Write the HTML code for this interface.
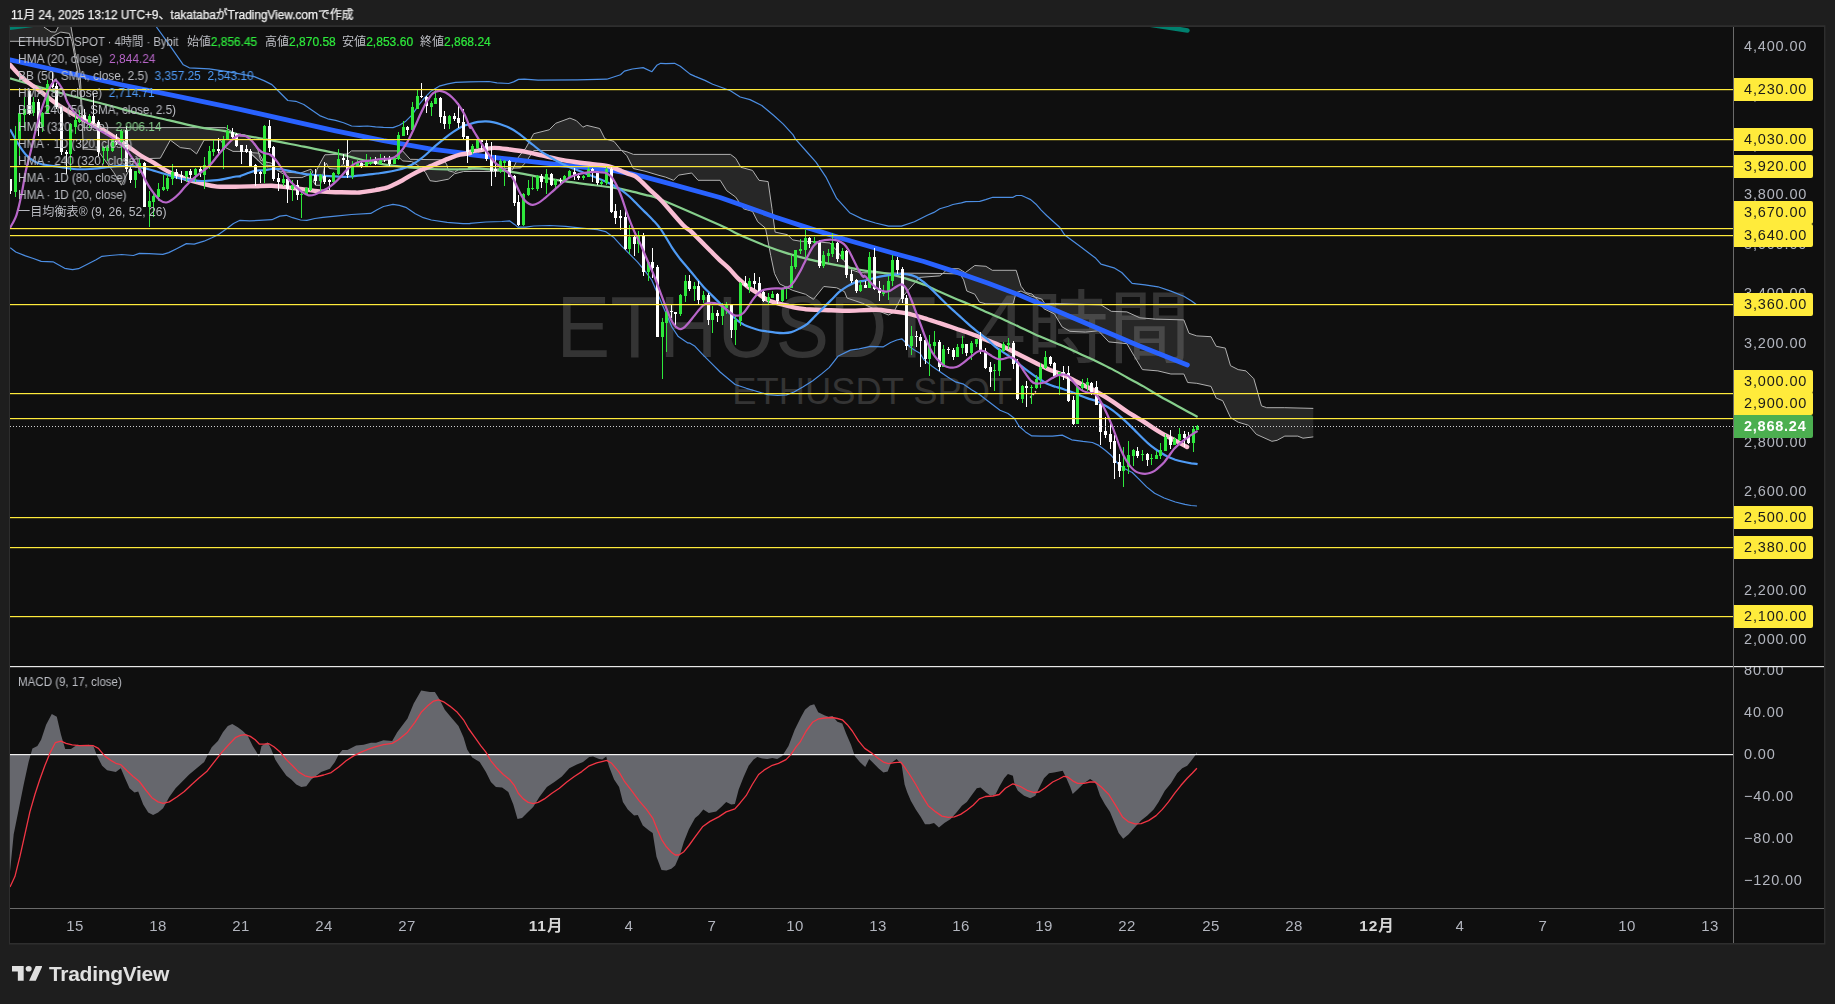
<!DOCTYPE html><html lang="ja"><head><meta charset="utf-8"><title>ETHUSDT</title><style>
html,body{margin:0;padding:0;background:#1e1e1e;}
body{width:1835px;height:1004px;position:relative;overflow:hidden;font-family:"Liberation Sans","Noto Sans CJK JP",sans-serif;}
.t{position:absolute;white-space:nowrap;line-height:1;will-change:transform;}
.hd{left:10.6px;top:8.5px;font-size:12px;color:#f0f0f0;transform-origin:left top;-webkit-text-stroke:0.25px #f0f0f0;}
.lg{left:18.4px;font-size:12px;color:#bcbec4;transform-origin:left top;}
.lg b{font-weight:normal}
.ax{left:1744px;font-size:14.5px;color:#b2b5be;letter-spacing:0.85px}
.yl{left:1734px;width:79px;height:23px;background:#ffeb3b;color:#1a1a1a;border-radius:0 2px 2px 0;font-size:14.5px;line-height:23px;text-indent:10px;letter-spacing:0.85px}
.gl{left:1734px;width:79px;height:23px;background:#4caf50;color:#fff;border-radius:0 2px 2px 0;font-size:14.5px;line-height:23px;text-indent:10px;font-weight:bold;letter-spacing:0.75px}
.tm{font-size:15px;letter-spacing:0.5px;color:#b2b5be;top:918px;transform:translateX(-50%);}
.tm.b{font-weight:bold;color:#d6d6d6;font-size:15.5px;letter-spacing:0.9px}
.g{color:#2ee93c;-webkit-text-stroke:0.2px #2ee93c}.p{color:#b866c9}.bl{color:#4f9bf5}.gr{color:#86cf8c}

</style></head><body>
<svg width="1835" height="1004" viewBox="0 0 1835 1004" style="position:absolute;left:0;top:0">
<defs><clipPath id="cm"><rect x="10" y="27" width="1723" height="639"/></clipPath><clipPath id="cd"><rect x="10" y="667" width="1723" height="241"/></clipPath></defs>
<rect x="9" y="25.2" width="1816.4" height="919.3" fill="#2e2e2e"/>
<rect x="10" y="27" width="1814" height="916" fill="#0f0f0f"/>
<g font-family="Liberation Sans, Noto Sans CJK JP, sans-serif" fill="#343434">
<text x="556.5" y="357" font-size="88" textLength="380" lengthAdjust="spacingAndGlyphs">ETHUSDT</text>
<text x="946" y="357" font-size="88">·</text>
<text x="977" y="356" font-size="88">4</text>
<text x="1026.5" y="356" font-size="80" textLength="164" lengthAdjust="spacingAndGlyphs">時間</text>
<text x="732.3" y="404" font-size="37" textLength="280" lengthAdjust="spacingAndGlyphs">ETHUSDT SPOT</text>
</g>
<g clip-path="url(#cm)">
<path d="M10.0 27.0 L43.8 27.0 L51.0 31.8 L55.6 32.1 L58.2 27.0 L71.0 27.0 L72.6 36.4 L75.2 52.7 L79.8 70.0 L82.0 106.7 L83.3 127.7 L83.3 149.7 L82.5 129.0 L80.1 90.8 L77.2 70.0 L72.0 41.6 L69.3 33.4 L60.8 32.1 L52.3 36.4 L50.0 41.3 L10.0 41.3 Z" fill="rgba(255,255,255,0.10)"/>
<path d="M10.0 41.3 L50.0 41.3 L52.3 36.4 L60.8 32.1 L69.3 33.4 L72.0 41.6 L77.2 70.0 L80.1 90.8 L82.5 129.0 L83.3 149.7" fill="none" stroke="#b0b0b0" stroke-width="1"/>
<path d="M43.8 27.0 L51.0 31.8 L55.6 32.1 L58.2 27.0" fill="none" stroke="#b0b0b0" stroke-width="1"/>
<path d="M71.0 27.0 L72.6 36.4 L75.2 52.7 L79.8 70.0 L82.0 106.7 L83.3 127.7" fill="none" stroke="#b0b0b0" stroke-width="1"/>
<path d="M6 28.2 L34 24.6" stroke="#00806e" stroke-width="4.6" fill="none"/>
<path d="M1135 22.4 L1187.4 30.4" stroke="#00806e" stroke-width="4.6" stroke-linecap="round" fill="none"/>
<path d="M82.6 127.6 L225.5 127.6 L235.5 133.8 L245.5 135.1 L253.0 142.6 L258.0 150.1 L260.5 160.2 L268.0 162.7 L268.0 167.0 L263.0 165.2 L258.0 160.2 L248.0 151.4 L233.0 151.4 L225.5 147.6 L220.4 140.1 L204.1 140.1 L196.6 153.9 L190.4 148.9 L180.3 147.6 L170.3 140.1 L160.3 158.2 L135.2 158.9 L126.4 175.2 L121.4 185.2 L113.9 172.7 L97.6 150.0 L82.6 148.9 Z" fill="rgba(255,255,255,0.10)"/>
<path d="M82.6 127.6 L225.5 127.6 L235.5 133.8 L245.5 135.1 L253.0 142.6 L258.0 150.1 L260.5 160.2 L268.0 162.7" fill="none" stroke="#b0b0b0" stroke-width="1"/>
<path d="M82.6 148.9 L97.6 150.0 L113.9 172.7 L121.4 185.2 L126.4 175.2 L135.2 158.9 L160.3 158.2 L170.3 140.1 L180.3 147.6 L190.4 148.9 L196.6 153.9 L204.1 140.1 L220.4 140.1 L225.5 147.6 L233.0 151.4 L248.0 151.4 L258.0 160.2 L263.0 165.2 L268.0 167.0" fill="none" stroke="#b0b0b0" stroke-width="1"/>
<path d="M250.0 152.5 L259.2 153.2 L263.7 161.6 L271.4 163.1 L277.5 170.8 L288.1 172.3 L300.4 173.1 L311.0 169.2 L313.0 172.0 L311.0 173.8 L301.9 177.6 L289.7 177.6 L280.5 172.3 L271.4 165.5 L263.0 165.2 L258.0 160.2 Z" fill="rgba(255,255,255,0.10)" stroke="#b0b0b0" stroke-width="1"/>
<path d="M313.3 181.5 L317.1 169.2 L320.2 163.1 L324.8 154.8 L347.6 154.0 L351.5 150.9 L402.6 150.9 L410.2 159.3 L443.8 159.8 L446.8 164.7 L448.4 170.8 L454.5 172.3 L459.0 169.2 L494.1 169.2 L500.0 168.6 L520.7 167.9 L525.9 162.2 L533.7 150.5 L621.7 150.5 L626.9 151.8 L633.4 154.4 L730.5 154.4 L735.7 158.3 L740.9 167.3 L752.5 170.4 L759.0 180.3 L768.1 181.6 L772.0 208.8 L775.1 232.1 L787.5 234.7 L792.7 239.9 L800.4 241.2 L815.3 241.7 L830.0 243.0 L838.0 252.0 L845.0 262.0 L852.0 270.0 L860.0 272.7 L942.9 273.5 L947.7 268.7 L958.8 268.7 L965.2 272.7 L974.8 265.5 L985.9 266.3 L992.3 270.3 L1016.2 270.3 L1021.0 286.2 L1025.8 292.6 L1032.0 294.0 L1038.5 301.0 L1044.0 308.8 L1054.4 313.9 L1062.1 326.9 L1069.9 331.3 L1085.4 332.1 L1098.4 330.8 L1108.8 341.9 L1126.9 343.7 L1134.6 356.7 L1142.4 369.6 L1157.9 370.9 L1170.9 374.0 L1183.8 374.0 L1187.7 382.5 L1196.8 383.3 L1211.0 386.4 L1216.2 398.1 L1222.7 400.7 L1230.5 417.5 L1238.2 422.2 L1248.6 425.3 L1256.3 434.3 L1271.9 441.3 L1277.1 440.3 L1284.8 436.1 L1297.8 436.1 L1303.0 438.2 L1313.3 436.9 L1313.3 408.4 L1284.8 407.7 L1266.7 407.7 L1261.5 405.9 L1253.8 378.7 L1246.0 370.9 L1238.2 369.6 L1230.5 365.7 L1225.3 348.1 L1216.2 346.3 L1211.0 336.7 L1196.8 335.9 L1189.0 333.3 L1183.8 319.9 L1155.4 319.1 L1139.8 317.8 L1126.9 311.9 L1111.3 311.3 L1101.0 304.9 L1054.4 303.6 L1044.9 303.8 L1041.7 299.0 L1030.5 295.8 L1021.0 291.0 L1016.2 292.6 L1013.0 303.8 L985.9 303.8 L979.5 302.2 L974.8 294.2 L966.8 291.0 L963.6 279.8 L960.0 274.0 L942.9 273.5 L939.7 275.9 L919.6 277.4 L909.2 289.1 L900.2 299.4 L893.7 312.4 L888.5 315.0 L875.6 309.8 L862.6 303.3 L847.1 298.1 L844.5 291.7 L836.7 287.8 L823.8 286.5 L813.4 299.4 L805.6 294.3 L792.7 290.4 L779.7 283.9 L774.5 273.5 L770.7 255.4 L765.5 228.2 L757.7 221.7 L752.5 211.4 L743.5 208.8 L735.7 197.1 L726.6 190.6 L720.2 180.3 L698.1 180.3 L691.7 173.0 L678.7 175.1 L673.5 180.3 L665.8 177.2 L658.0 175.1 L645.0 171.2 L633.4 168.6 L626.9 155.7 L620.4 149.2 L614.0 141.4 L604.9 138.8 L599.7 128.5 L586.8 125.4 L582.9 127.2 L576.4 120.7 L569.9 118.1 L555.7 123.3 L549.2 129.8 L533.7 133.7 L525.9 147.9 L518.5 157.0 L512.4 170.0 L494.1 171.5 L463.6 171.5 L454.5 173.8 L448.4 179.2 L436.1 181.5 L430.0 180.7 L425.5 172.3 L417.8 165.4 L411.7 161.6 L402.6 160.9 L399.5 157.8 L347.6 167.7 L343.1 164.7 L337.0 169.2 L329.3 168.5 L326.3 163.1 L324.8 166.2 L322.5 176.9 L320.2 185.3 L315.6 185.3 L313.3 181.5 Z" fill="rgba(255,255,255,0.10)"/>
<path d="M313.3 181.5 L317.1 169.2 L320.2 163.1 L324.8 154.8 L347.6 154.0 L351.5 150.9 L402.6 150.9 L410.2 159.3 L443.8 159.8 L446.8 164.7 L448.4 170.8 L454.5 172.3 L459.0 169.2 L494.1 169.2 L500.0 168.6 L520.7 167.9 L525.9 162.2 L533.7 150.5 L621.7 150.5 L626.9 151.8 L633.4 154.4 L730.5 154.4 L735.7 158.3 L740.9 167.3 L752.5 170.4 L759.0 180.3 L768.1 181.6 L772.0 208.8 L775.1 232.1 L787.5 234.7 L792.7 239.9 L800.4 241.2 L815.3 241.7 L830.0 243.0 L838.0 252.0 L845.0 262.0 L852.0 270.0 L860.0 272.7 L942.9 273.5 L947.7 268.7 L958.8 268.7 L965.2 272.7 L974.8 265.5 L985.9 266.3 L992.3 270.3 L1016.2 270.3 L1021.0 286.2 L1025.8 292.6 L1032.0 294.0 L1038.5 301.0 L1044.0 308.8 L1054.4 313.9 L1062.1 326.9 L1069.9 331.3 L1085.4 332.1 L1098.4 330.8 L1108.8 341.9 L1126.9 343.7 L1134.6 356.7 L1142.4 369.6 L1157.9 370.9 L1170.9 374.0 L1183.8 374.0 L1187.7 382.5 L1196.8 383.3 L1211.0 386.4 L1216.2 398.1 L1222.7 400.7 L1230.5 417.5 L1238.2 422.2 L1248.6 425.3 L1256.3 434.3 L1271.9 441.3 L1277.1 440.3 L1284.8 436.1 L1297.8 436.1 L1303.0 438.2 L1313.3 436.9" fill="none" stroke="#b0b0b0" stroke-width="1"/>
<path d="M313.3 181.5 L315.6 185.3 L320.2 185.3 L322.5 176.9 L324.8 166.2 L326.3 163.1 L329.3 168.5 L337.0 169.2 L343.1 164.7 L347.6 167.7 L399.5 157.8 L402.6 160.9 L411.7 161.6 L417.8 165.4 L425.5 172.3 L430.0 180.7 L436.1 181.5 L448.4 179.2 L454.5 173.8 L463.6 171.5 L494.1 171.5 L512.4 170.0 L518.5 157.0 L525.9 147.9 L533.7 133.7 L549.2 129.8 L555.7 123.3 L569.9 118.1 L576.4 120.7 L582.9 127.2 L586.8 125.4 L599.7 128.5 L604.9 138.8 L614.0 141.4 L620.4 149.2 L626.9 155.7 L633.4 168.6 L645.0 171.2 L658.0 175.1 L665.8 177.2 L673.5 180.3 L678.7 175.1 L691.7 173.0 L698.1 180.3 L720.2 180.3 L726.6 190.6 L735.7 197.1 L743.5 208.8 L752.5 211.4 L757.7 221.7 L765.5 228.2 L770.7 255.4 L774.5 273.5 L779.7 283.9 L792.7 290.4 L805.6 294.3 L813.4 299.4 L823.8 286.5 L836.7 287.8 L844.5 291.7 L847.1 298.1 L862.6 303.3 L875.6 309.8 L888.5 315.0 L893.7 312.4 L900.2 299.4 L909.2 289.1 L919.6 277.4 L939.7 275.9 L942.9 273.5 L960.0 274.0 L963.6 279.8 L966.8 291.0 L974.8 294.2 L979.5 302.2 L985.9 303.8 L1013.0 303.8 L1016.2 292.6 L1021.0 291.0 L1030.5 295.8 L1041.7 299.0 L1044.9 303.8 L1054.4 303.6 L1101.0 304.9 L1111.3 311.3 L1126.9 311.9 L1139.8 317.8 L1155.4 319.1 L1183.8 319.9 L1189.0 333.3 L1196.8 335.9 L1211.0 336.7 L1216.2 346.3 L1225.3 348.1 L1230.5 365.7 L1238.2 369.6 L1246.0 370.9 L1253.8 378.7 L1261.5 405.9 L1266.7 407.7 L1284.8 407.7 L1313.3 408.4" fill="none" stroke="#b0b0b0" stroke-width="1"/>
<path d="M1030.3 397.6 L1035.9 391.3" stroke="#f9bdd3" stroke-width="1.6" stroke-dasharray="2 1.5"/>
<path d="M156.4 27.0 L169.4 44.9 L183.3 64.8 L189.3 67.8 L209.2 68.8 L229.1 71.8 L254.3 76.6 L263.9 80.6 L271.9 84.6 L279.8 92.5 L287.8 100.5 L295.8 101.3 L303.8 104.5 L311.7 110.1 L319.7 115.6 L327.7 118.8 L335.6 120.4 L343.6 122.8 L351.6 126.0 L359.5 126.3 L367.5 126.0 L375.5 126.8 L383.4 127.3 L393.0 127.6 L399.4 125.2 L405.8 121.2 L412.1 114.8 L418.5 105.3 L424.9 97.3 L431.3 90.9 L439.2 86.2 L447.8 83.9 L455.7 82.3 L469.4 81.9 L489.0 81.5 L496.9 82.9 L508.7 83.5 L513.6 81.9 L518.5 79.4 L524.4 79.2 L538.1 80.2 L577.3 79.8 L606.8 79.2 L620.5 74.7 L624.4 71.1 L632.3 69.0 L643.1 67.6 L651.9 71.7 L656.8 65.3 L660.7 63.3 L665.6 63.7 L674.5 63.3 L680.3 66.2 L690.1 74.1 L695.1 76.4 L704.9 80.4 L712.7 84.3 L722.5 87.8 L730.4 90.8 L740.2 97.0 L750.0 99.6 L761.8 105.5 L773.5 115.3 L783.3 124.1 L793.1 134.9 L795.3 138.9 L805.6 150.5 L816.0 162.2 L826.3 177.7 L836.7 198.4 L849.6 212.7 L862.6 219.1 L875.5 223.0 L888.5 226.1 L901.4 226.1 L914.4 221.7 L927.3 215.3 L933.9 212.4 L939.8 208.8 L948.3 206.2 L952.9 204.5 L961.4 202.9 L966.0 201.6 L979.7 201.3 L985.6 199.6 L992.8 197.3 L1013.1 197.3 L1016.3 195.5 L1021.6 195.5 L1025.5 197.3 L1030.7 199.6 L1036.0 204.2 L1041.2 210.1 L1046.6 215.5 L1059.6 227.2 L1064.7 235.0 L1080.3 246.6 L1095.8 258.3 L1101.0 264.2 L1113.9 267.8 L1121.7 272.5 L1132.1 283.4 L1145.0 284.9 L1158.0 286.8 L1170.9 291.1 L1183.8 296.3 L1191.6 301.0 L1196.3 304.4" fill="none" stroke="#4c8ee3" stroke-width="1.2" stroke-linejoin="round"/>
<path d="M10.2 247.7 L15.7 252.0 L25.5 255.9 L33.4 258.5 L41.2 261.4 L53.0 261.8 L64.7 268.3 L72.6 269.6 L78.5 268.7 L88.3 263.8 L96.1 259.8 L102.0 256.3 L109.9 255.5 L121.6 254.5 L133.4 255.5 L139.3 253.4 L149.1 253.6 L162.8 254.3 L168.7 252.6 L176.6 248.7 L186.4 243.6 L194.2 244.1 L204.0 241.2 L211.9 237.7 L217.8 234.9 L225.6 229.4 L233.5 223.5 L239.0 220.8 L240.0 220.4 L249.6 220.8 L259.1 220.4 L271.9 219.7 L279.8 216.1 L286.2 215.3 L292.6 217.7 L300.6 220.0 L306.9 220.4 L314.9 218.5 L322.9 217.3 L335.6 216.1 L351.6 214.5 L370.7 213.4 L377.1 209.7 L383.5 206.5 L393.0 204.4 L399.4 205.4 L405.8 207.3 L415.3 213.7 L423.3 217.7 L431.3 220.0 L447.2 222.4 L463.1 223.6 L470.0 223.7 L470.0 223.3 L485.9 222.0 L501.9 221.5 L509.8 220.9 L514.6 224.4 L517.8 227.1 L525.8 227.1 L533.8 226.0 L549.7 225.5 L565.6 226.3 L581.6 228.1 L597.5 229.7 L605.5 231.6 L613.5 237.2 L621.4 245.9 L629.4 253.9 L637.4 261.9 L645.3 271.4 L651.7 280.0 L671.9 327.0 L678.3 336.6 L687.8 342.9 L690.0 343.2 L695.0 346.3 L702.5 354.4 L711.3 363.2 L720.1 372.0 L727.6 378.3 L735.1 384.5 L746.4 388.3 L758.9 392.0 L767.7 394.6 L777.7 395.4 L786.5 394.9 L794.0 392.0 L802.8 387.0 L812.8 380.8 L821.6 373.9 L829.1 367.6 L834.1 361.3 L837.9 356.3 L850.4 350.1 L859.2 348.8 L870.5 346.3 L883.0 346.9 L890.6 342.5 L896.8 340.0 L901.8 338.8 L905.6 342.5 L910.6 347.5 L915.6 350.7 L920.0 353.2 L923.8 359.5 L931.7 365.9 L939.7 371.5 L947.7 377.1 L955.6 381.9 L963.6 384.2 L971.6 389.8 L979.5 394.6 L985.9 399.4 L1000.0 410.3 L1008.0 413.5 L1014.3 418.3 L1019.1 426.3 L1025.5 431.9 L1031.9 435.9 L1041.4 436.2 L1052.6 436.2 L1062.2 435.1 L1071.7 439.8 L1082.9 441.4 L1092.4 442.5 L1098.8 445.4 L1105.2 450.2 L1111.6 455.8 L1117.9 463.7 L1124.3 468.5 L1132.3 472.5 L1138.7 478.9 L1146.6 486.9 L1154.6 493.2 L1164.2 498.0 L1175.3 502.0 L1184.9 504.4 L1191.0 505.5 L1197.0 506.0" fill="none" stroke="#4c8ee3" stroke-width="1.2" stroke-linejoin="round"/>
<path d="M10.0 78.4 C15.3 80.0 31.3 84.7 41.9 87.8 C52.5 90.8 63.1 93.7 73.8 96.5 C84.4 99.3 95.0 101.7 105.6 104.5 C116.3 107.3 126.9 110.6 137.5 113.3 C148.1 115.9 158.8 118.0 169.4 120.4 C180.0 122.8 192.2 125.9 201.3 127.6 C210.3 129.3 217.1 129.6 223.6 130.8 C230.0 132.0 237.3 134.1 240.0 134.8 C242.7 135.4 234.7 133.8 240.0 134.8 C245.3 135.7 261.3 138.4 271.9 140.3 C282.5 142.3 293.1 144.6 303.8 146.7 C314.4 148.9 327.7 151.4 335.6 153.1 C343.6 154.8 346.3 155.8 351.6 157.1 C356.9 158.4 362.2 159.9 367.5 161.1 C372.8 162.3 378.1 163.4 383.5 164.3 C388.8 165.1 394.1 165.7 399.4 166.3 C404.7 166.9 410.0 167.5 415.3 167.9 C420.6 168.4 426.0 168.8 431.3 169.0 C436.6 169.3 440.8 169.4 447.2 169.4 C453.7 169.4 466.2 169.3 470.0 169.0 C473.8 168.8 466.0 167.7 470.0 167.8 C474.0 167.9 485.9 168.9 493.9 169.7 C501.9 170.6 509.8 171.6 517.8 172.9 C525.8 174.2 533.8 176.0 541.7 177.4 C549.7 178.8 557.7 180.2 565.6 181.4 C573.6 182.6 581.6 183.5 589.5 184.6 C597.5 185.6 606.8 186.7 613.5 187.7 C620.1 188.8 624.1 189.7 629.4 190.9 C634.7 192.1 640.0 193.5 645.3 194.9 C650.6 196.4 648.9 194.7 661.3 199.7 C673.7 204.7 707.3 219.5 719.7 225.0 C732.1 230.5 730.3 230.4 735.6 233.0 C740.9 235.5 746.3 237.9 751.6 240.1 C756.9 242.4 762.2 244.5 767.5 246.5 C772.8 248.5 778.1 250.4 783.5 252.1 C788.8 253.8 794.1 255.4 799.4 256.9 C804.7 258.3 810.0 259.7 815.3 260.9 C820.6 262.1 826.0 263.0 831.3 264.1 C836.6 265.1 841.9 266.2 847.2 267.2 C852.5 268.3 858.4 269.7 863.1 270.4 C867.9 271.2 871.2 271.2 875.9 271.9 C880.7 272.6 886.6 273.6 891.9 274.7 C897.2 275.9 902.5 277.4 907.8 279.1 C913.1 280.7 918.4 282.5 923.8 284.6 C929.1 286.8 934.4 289.5 939.7 291.8 C945.0 294.1 950.3 296.4 955.6 298.7 C960.9 300.9 966.3 303.0 971.6 305.3 C976.9 307.7 982.2 310.2 987.5 312.5 C992.8 314.9 998.1 317.0 1003.5 319.4 C1008.8 321.8 1014.1 324.4 1019.4 326.9 C1024.7 329.4 1028.5 331.3 1035.3 334.4 C1042.2 337.4 1053.2 341.8 1060.6 345.0 C1068.0 348.2 1073.9 351.1 1079.7 353.8 C1085.5 356.4 1090.3 358.4 1095.6 360.9 C1100.9 363.5 1106.3 366.1 1111.6 368.9 C1116.9 371.7 1122.2 374.8 1127.5 377.7 C1132.8 380.6 1138.1 383.4 1143.5 386.4 C1148.8 389.5 1154.1 392.9 1159.4 396.0 C1164.7 399.1 1170.0 401.8 1175.3 404.8 C1180.6 407.7 1187.5 411.5 1191.3 413.5 C1195.0 415.6 1196.6 416.5 1197.6 417.0" fill="none" stroke="#86cf8c" stroke-width="2.2" stroke-linejoin="round"/>
<path d="M10.0 59.9 L60.0 71.0 L120.0 84.5 L179.0 96.7 L240.0 109.3 L287.8 120.1 L335.6 130.8 L383.5 140.7 L431.3 149.1 L470.0 153.8 L470.0 154.7 L501.9 158.3 L533.8 161.8 L565.6 165.4 L597.5 168.6 L613.5 170.7 L629.4 173.4 L645.3 177.1 L661.3 181.4 L720.0 197.5 L740.0 204.4 L774.9 217.0 L809.7 228.4 L844.6 239.3 L879.5 249.3 L900.0 255.0 L923.8 261.5 L955.6 271.9 L987.5 283.0 L1019.4 295.0 L1137.1 345.0 L1187.4 364.9" fill="none" stroke="#2962ff" stroke-width="4.8" stroke-linecap="round" stroke-linejoin="round"/>
<path d="M10.0 64.8 C12.1 67.0 17.4 73.6 22.7 78.2 C28.0 82.8 35.5 87.8 41.9 92.5 C48.3 97.3 54.6 102.6 61.0 106.9 C67.4 111.1 73.8 114.6 80.1 118.0 C86.5 121.5 92.4 123.6 99.3 127.6 C106.2 131.6 114.7 137.3 121.6 141.9 C128.5 146.6 135.4 152.0 140.7 155.5 C146.0 158.9 148.7 159.9 153.5 162.7 C158.2 165.5 164.1 169.6 169.4 172.2 C174.7 174.9 180.0 176.7 185.3 178.6 C190.6 180.5 196.0 182.1 201.3 183.4 C206.6 184.7 210.8 186.0 217.2 186.6 C223.7 187.1 236.2 186.6 240.0 186.6 C243.8 186.6 237.3 186.6 240.0 186.6 C242.7 186.5 250.6 186.4 255.9 186.3 C261.3 186.1 266.6 185.6 271.9 185.8 C277.2 186.0 282.5 186.8 287.8 187.4 C293.1 188.0 298.4 188.8 303.8 189.4 C309.1 190.1 314.4 190.9 319.7 191.4 C325.0 191.8 330.3 192.0 335.6 192.2 C340.9 192.3 347.6 192.4 351.6 192.5 C355.6 192.5 356.9 192.7 359.5 192.5 C362.2 192.3 364.9 191.8 367.5 191.4 C370.2 191.0 372.6 190.6 375.5 190.1 C378.4 189.5 382.1 189.0 385.0 188.2 C388.0 187.3 390.1 186.3 393.0 185.0 C395.9 183.7 399.4 181.9 402.6 180.2 C405.8 178.5 409.0 176.3 412.1 174.6 C415.3 172.9 418.5 171.3 421.7 169.8 C424.9 168.4 428.1 167.2 431.3 165.9 C434.5 164.5 437.6 163.2 440.8 161.9 C444.0 160.5 447.2 159.1 450.4 157.9 C453.6 156.7 456.7 155.5 460.0 154.7 C463.2 153.9 468.3 153.6 470.0 153.1 C471.7 152.6 468.4 152.3 470.0 151.9 C471.6 151.4 475.6 150.9 479.6 150.3 C483.5 149.6 488.9 148.0 493.9 147.9 C499.0 147.8 504.5 148.8 509.8 149.5 C515.2 150.2 520.5 150.9 525.8 151.9 C531.1 152.9 536.4 154.2 541.7 155.4 C547.0 156.6 552.4 158.0 557.7 159.1 C563.0 160.1 568.3 161.0 573.6 161.8 C578.9 162.6 584.2 163.2 589.5 163.8 C594.9 164.5 601.5 165.1 605.5 165.7 C609.5 166.4 610.8 166.9 613.5 167.8 C616.1 168.7 618.8 169.9 621.4 171.0 C624.1 172.1 627.0 173.3 629.4 174.2 C631.8 175.1 633.6 175.3 635.8 176.6 C637.9 177.9 639.8 179.9 642.1 182.2 C644.5 184.4 646.9 187.1 650.1 190.1 C653.3 193.2 655.8 194.7 661.3 200.5 C666.8 206.3 678.1 219.9 683.0 225.0 C688.0 230.1 688.1 228.7 691.0 231.4 C693.9 234.0 697.4 237.8 700.6 240.9 C703.8 244.1 706.9 247.3 710.1 250.5 C713.3 253.7 716.5 257.0 719.7 260.1 C722.9 263.1 726.1 265.6 729.3 268.8 C732.4 272.0 735.6 276.1 738.8 279.2 C742.0 282.2 745.2 284.8 748.4 287.2 C751.6 289.6 754.8 291.4 757.9 293.5 C761.1 295.7 764.3 298.3 767.5 299.9 C770.7 301.5 773.9 302.2 777.1 303.1 C780.3 304.0 783.5 304.7 786.6 305.5 C789.8 306.3 793.0 307.3 796.2 307.9 C799.4 308.5 802.6 308.8 805.8 309.2 C809.0 309.5 811.1 309.6 815.3 309.8 C819.6 310.0 826.0 310.1 831.3 310.3 C836.6 310.4 839.8 310.8 847.2 310.8 C854.7 310.7 868.5 309.7 875.9 309.8 C883.4 309.9 886.6 310.8 891.9 311.4 C897.2 312.0 902.5 312.5 907.8 313.6 C913.1 314.8 918.4 316.5 923.8 318.1 C929.1 319.7 934.4 321.5 939.7 323.2 C945.0 324.9 950.3 326.7 955.6 328.5 C960.9 330.3 966.3 332.0 971.6 334.0 C976.9 336.0 982.2 338.3 987.5 340.4 C992.8 342.5 998.1 344.4 1003.5 346.8 C1008.8 349.2 1014.1 352.1 1019.4 354.8 C1024.7 357.4 1030.6 360.4 1035.3 362.7 C1040.1 365.1 1043.1 366.8 1047.8 368.9 C1052.6 371.0 1058.4 372.9 1063.8 375.3 C1069.1 377.7 1074.4 380.6 1079.7 383.3 C1085.0 385.9 1090.3 388.3 1095.6 391.2 C1100.9 394.1 1106.3 397.3 1111.6 400.8 C1116.9 404.2 1122.2 408.5 1127.5 411.9 C1132.8 415.4 1138.1 418.2 1143.5 421.5 C1148.8 424.8 1154.1 428.7 1159.4 431.9 C1164.7 435.1 1170.7 438.1 1175.3 440.6 C1180.0 443.2 1185.2 445.9 1187.1 447.0" fill="none" stroke="#f9bdd3" stroke-width="4.4" stroke-linecap="round" stroke-linejoin="round"/>
<path d="M10.0 129.2 C11.3 131.6 15.3 139.3 18.0 143.5 C20.6 147.8 23.3 151.8 25.9 154.7 C28.6 157.6 31.3 159.5 33.9 161.1 C36.6 162.7 37.9 163.3 41.9 164.3 C45.9 165.2 52.5 165.9 57.8 166.6 C63.1 167.4 68.4 168.6 73.8 169.0 C79.1 169.4 84.4 169.3 89.7 169.0 C95.0 168.8 100.3 168.0 105.6 167.4 C110.9 166.9 116.3 166.0 121.6 165.9 C126.9 165.7 132.2 165.9 137.5 166.6 C142.8 167.4 148.1 169.2 153.5 170.6 C158.8 172.1 164.1 174.0 169.4 175.4 C174.7 176.9 180.0 178.5 185.3 179.4 C190.6 180.3 196.0 180.9 201.3 181.0 C206.6 181.1 211.9 180.9 217.2 180.2 C222.5 179.5 229.3 177.7 233.1 177.0 C236.9 176.3 238.9 176.3 240.0 176.2 C241.1 176.1 238.7 176.7 240.0 176.2 C241.3 175.7 245.3 174.0 248.0 173.0 C250.6 172.1 253.3 171.1 255.9 170.6 C258.6 170.2 261.3 170.6 263.9 170.3 C266.6 170.0 269.2 169.3 271.9 169.0 C274.5 168.8 277.2 168.8 279.8 169.0 C282.5 169.3 285.2 170.1 287.8 170.6 C290.5 171.2 293.1 171.7 295.8 172.2 C298.4 172.8 301.1 173.4 303.8 173.8 C306.4 174.2 309.1 174.4 311.7 174.6 C314.4 174.9 316.8 175.2 319.7 175.4 C322.6 175.7 326.1 176.0 329.3 176.2 C332.4 176.4 335.6 176.6 338.8 176.7 C342.0 176.8 345.2 176.9 348.4 176.7 C351.6 176.5 354.8 176.1 357.9 175.7 C361.1 175.4 364.3 175.0 367.5 174.6 C370.7 174.2 373.9 173.9 377.1 173.5 C380.3 173.1 383.5 172.8 386.6 172.2 C389.8 171.7 393.0 171.1 396.2 170.3 C399.4 169.5 402.6 168.7 405.8 167.4 C409.0 166.2 412.1 164.7 415.3 162.7 C418.5 160.7 421.7 158.1 424.9 155.5 C428.1 152.8 431.3 149.5 434.5 146.7 C437.6 143.9 440.8 141.3 444.0 138.8 C447.2 136.2 450.4 133.7 453.6 131.6 C456.8 129.5 460.4 127.3 463.1 126.0 C465.9 124.8 468.9 124.4 470.0 124.1 C471.1 123.8 468.7 124.3 470.0 124.0 C471.3 123.6 475.3 122.4 478.0 121.9 C480.6 121.5 483.3 121.2 485.9 121.3 C488.6 121.4 491.3 121.8 493.9 122.4 C496.6 123.0 499.2 123.9 501.9 124.8 C504.5 125.7 507.2 126.6 509.8 128.0 C512.5 129.3 515.2 130.9 517.8 132.8 C520.5 134.6 523.1 137.0 525.8 139.1 C528.4 141.3 531.1 143.4 533.8 145.5 C536.4 147.6 539.1 150.0 541.7 151.9 C544.4 153.7 547.0 155.1 549.7 156.7 C552.4 158.3 555.0 160.0 557.7 161.4 C560.3 162.9 563.0 164.2 565.6 165.4 C568.3 166.6 570.9 167.6 573.6 168.6 C576.3 169.7 578.9 170.7 581.6 171.8 C584.2 172.9 586.9 173.9 589.5 175.0 C592.2 176.1 594.9 177.1 597.5 178.2 C600.2 179.2 602.8 180.2 605.5 181.4 C608.1 182.6 610.8 183.9 613.5 185.3 C616.1 186.8 618.8 188.3 621.4 190.1 C624.1 192.0 626.7 194.1 629.4 196.5 C632.0 198.9 634.7 201.8 637.4 204.5 C640.0 207.1 642.7 209.8 645.3 212.4 C648.0 215.1 650.6 217.5 653.3 220.4 C656.0 223.3 658.2 225.5 661.3 230.0 C664.4 234.5 668.8 242.6 671.9 247.3 C675.0 252.1 677.2 255.0 679.8 258.5 C682.5 261.9 685.2 264.8 687.8 268.0 C690.5 271.2 693.1 274.4 695.8 277.6 C698.4 280.8 701.1 284.2 703.8 287.2 C706.4 290.1 709.1 292.5 711.7 295.1 C714.4 297.8 717.0 300.4 719.7 303.1 C722.4 305.8 725.0 308.4 727.7 311.1 C730.3 313.7 733.0 316.8 735.6 319.0 C738.3 321.3 740.9 323.2 743.6 324.6 C746.3 326.1 748.9 326.9 751.6 327.8 C754.2 328.7 756.9 329.6 759.5 330.2 C762.2 330.8 764.9 331.1 767.5 331.5 C770.2 331.9 772.8 332.3 775.5 332.6 C778.1 332.9 780.8 333.1 783.5 333.1 C786.1 333.0 788.8 332.9 791.4 332.1 C794.1 331.4 796.7 330.0 799.4 328.6 C802.0 327.2 804.7 325.9 807.4 323.8 C810.0 321.7 812.7 318.5 815.3 315.9 C818.0 313.2 820.6 310.5 823.3 307.9 C826.0 305.2 828.6 302.6 831.3 299.9 C833.9 297.3 836.6 294.2 839.2 291.9 C841.9 289.7 844.6 288.0 847.2 286.4 C849.9 284.8 852.5 283.3 855.2 282.4 C857.8 281.5 861.0 281.2 863.1 280.8 C865.3 280.4 865.8 280.4 868.0 279.8 C870.1 279.3 873.3 278.1 875.9 277.5 C878.6 276.8 881.3 276.3 883.9 275.9 C886.6 275.4 889.2 275.1 891.9 274.7 C894.5 274.4 897.2 274.0 899.8 274.0 C902.5 273.9 905.2 273.8 907.8 274.3 C910.5 274.7 913.1 275.3 915.8 276.7 C918.4 278.0 921.1 280.1 923.8 282.2 C926.4 284.4 929.1 286.9 931.7 289.4 C934.4 291.9 937.0 294.7 939.7 297.4 C942.4 300.0 945.0 302.8 947.7 305.3 C950.3 307.9 953.0 310.1 955.6 312.5 C958.3 314.9 960.9 317.3 963.6 319.7 C966.3 322.1 968.9 324.6 971.6 326.9 C974.2 329.1 976.9 331.1 979.5 333.2 C982.2 335.4 984.9 337.4 987.5 339.6 C990.2 341.9 992.8 344.7 995.5 346.8 C998.1 348.9 1000.8 350.5 1003.5 352.4 C1006.1 354.2 1008.8 356.0 1011.4 357.9 C1014.1 359.9 1016.7 362.2 1019.4 364.3 C1022.0 366.4 1024.7 368.7 1027.4 370.7 C1030.0 372.7 1031.9 374.1 1035.3 376.3 C1038.7 378.5 1044.4 382.3 1047.8 384.1 C1051.2 385.8 1053.1 385.9 1055.8 386.8 C1058.4 387.6 1061.1 388.4 1063.8 389.3 C1066.4 390.2 1069.1 391.0 1071.7 392.0 C1074.4 393.0 1077.0 394.1 1079.7 395.2 C1082.4 396.3 1085.0 397.5 1087.7 398.4 C1090.3 399.3 1093.0 399.7 1095.6 400.8 C1098.3 401.8 1100.9 403.3 1103.6 404.8 C1106.3 406.2 1108.9 407.7 1111.6 409.6 C1114.2 411.4 1116.9 413.7 1119.5 415.9 C1122.2 418.2 1124.9 420.6 1127.5 423.1 C1130.2 425.6 1132.8 428.4 1135.5 431.1 C1138.1 433.7 1140.8 436.5 1143.5 439.0 C1146.1 441.6 1148.8 444.1 1151.4 446.2 C1154.1 448.3 1156.7 450.1 1159.4 451.8 C1162.0 453.5 1164.7 455.2 1167.4 456.6 C1170.0 457.9 1172.7 458.9 1175.3 459.8 C1178.0 460.6 1180.6 461.2 1183.3 461.8 C1186.0 462.4 1188.9 462.9 1191.3 463.3 C1193.7 463.6 1196.6 463.9 1197.6 464.1" fill="none" stroke="#4f9bf5" stroke-width="2.2" stroke-linejoin="round"/>
<g shape-rendering="crispEdges">
<rect x="1197" y="424.7" width="1" height="5.6" fill="#2ee93c"/>
<rect x="1196" y="426.0" width="3" height="3.8" fill="#2ee93c"/>
<rect x="1193" y="426.0" width="1" height="26.1" fill="#2ee93c"/>
<rect x="1192" y="428.7" width="3" height="14.3" fill="#2ee93c"/>
<rect x="1188" y="431.9" width="1" height="12.3" fill="#ffffff"/>
<rect x="1187" y="437.4" width="3" height="5.6" fill="#ffffff"/>
<rect x="1184" y="431.1" width="1" height="15.9" fill="#ffffff"/>
<rect x="1183" y="433.9" width="3" height="4.3" fill="#ffffff"/>
<rect x="1179" y="427.9" width="1" height="12.8" fill="#2ee93c"/>
<rect x="1178" y="433.9" width="3" height="5.9" fill="#2ee93c"/>
<rect x="1174" y="437.4" width="1" height="8.0" fill="#2ee93c"/>
<rect x="1173" y="439.0" width="3" height="6.1" fill="#2ee93c"/>
<rect x="1170" y="430.3" width="1" height="18.6" fill="#ffffff"/>
<rect x="1169" y="436.6" width="3" height="8.4" fill="#ffffff"/>
<rect x="1165" y="434.3" width="1" height="16.7" fill="#2ee93c"/>
<rect x="1164" y="436.6" width="3" height="13.9" fill="#2ee93c"/>
<rect x="1160" y="443.0" width="1" height="15.9" fill="#2ee93c"/>
<rect x="1159" y="449.9" width="3" height="5.9" fill="#2ee93c"/>
<rect x="1156" y="451.0" width="1" height="8.4" fill="#2ee93c"/>
<rect x="1155" y="455.0" width="3" height="4.0" fill="#2ee93c"/>
<rect x="1151" y="454.2" width="1" height="11.2" fill="#2ee93c"/>
<rect x="1150" y="457.8" width="3" height="1.6" fill="#2ee93c"/>
<rect x="1147" y="452.6" width="1" height="13.2" fill="#ffffff"/>
<rect x="1146" y="453.7" width="3" height="6.4" fill="#ffffff"/>
<rect x="1142" y="449.9" width="1" height="11.2" fill="#2ee93c"/>
<rect x="1141" y="453.7" width="3" height="1.6" fill="#2ee93c"/>
<rect x="1137" y="447.0" width="1" height="11.2" fill="#ffffff"/>
<rect x="1136" y="450.5" width="3" height="5.3" fill="#ffffff"/>
<rect x="1133" y="448.6" width="1" height="17.2" fill="#2ee93c"/>
<rect x="1132" y="450.2" width="3" height="5.6" fill="#2ee93c"/>
<rect x="1128" y="440.6" width="1" height="33.5" fill="#2ee93c"/>
<rect x="1127" y="455.0" width="3" height="11.5" fill="#2ee93c"/>
<rect x="1123" y="447.0" width="1" height="39.8" fill="#2ee93c"/>
<rect x="1122" y="466.1" width="3" height="4.8" fill="#2ee93c"/>
<rect x="1119" y="454.2" width="1" height="22.8" fill="#ffffff"/>
<rect x="1118" y="462.2" width="3" height="8.8" fill="#ffffff"/>
<rect x="1114" y="435.1" width="1" height="43.8" fill="#ffffff"/>
<rect x="1113" y="440.6" width="3" height="22.3" fill="#ffffff"/>
<rect x="1110" y="419.9" width="1" height="29.0" fill="#ffffff"/>
<rect x="1109" y="434.3" width="3" height="8.0" fill="#ffffff"/>
<rect x="1105" y="417.0" width="1" height="21.2" fill="#ffffff"/>
<rect x="1104" y="431.1" width="3" height="4.0" fill="#ffffff"/>
<rect x="1100" y="403.2" width="1" height="41.9" fill="#ffffff"/>
<rect x="1099" y="404.0" width="3" height="27.9" fill="#ffffff"/>
<rect x="1096" y="380.9" width="1" height="24.4" fill="#ffffff"/>
<rect x="1095" y="387.2" width="3" height="17.5" fill="#ffffff"/>
<rect x="1091" y="382.0" width="1" height="12.8" fill="#ffffff"/>
<rect x="1090" y="383.3" width="3" height="8.8" fill="#ffffff"/>
<rect x="1087" y="377.7" width="1" height="12.8" fill="#2ee93c"/>
<rect x="1086" y="382.0" width="3" height="2.9" fill="#2ee93c"/>
<rect x="1082" y="378.8" width="1" height="10.8" fill="#2ee93c"/>
<rect x="1081" y="384.1" width="3" height="3.7" fill="#2ee93c"/>
<rect x="1077" y="387.2" width="1" height="37.1" fill="#2ee93c"/>
<rect x="1076" y="387.2" width="3" height="36.7" fill="#2ee93c"/>
<rect x="1073" y="396.0" width="1" height="29.0" fill="#ffffff"/>
<rect x="1072" y="400.0" width="3" height="24.4" fill="#ffffff"/>
<rect x="1068" y="365.7" width="1" height="36.7" fill="#ffffff"/>
<rect x="1067" y="372.9" width="3" height="27.9" fill="#ffffff"/>
<rect x="1063" y="365.7" width="1" height="14.3" fill="#ffffff"/>
<rect x="1062" y="372.1" width="3" height="2.9" fill="#ffffff"/>
<rect x="1059" y="371.8" width="1" height="23.4" fill="#2ee93c"/>
<rect x="1058" y="372.1" width="3" height="3.2" fill="#2ee93c"/>
<rect x="1054" y="361.7" width="1" height="14.3" fill="#ffffff"/>
<rect x="1053" y="362.5" width="3" height="13.1" fill="#ffffff"/>
<rect x="1050" y="355.8" width="1" height="9.9" fill="#ffffff"/>
<rect x="1049" y="357.0" width="3" height="6.9" fill="#ffffff"/>
<rect x="1045" y="351.1" width="1" height="17.9" fill="#2ee93c"/>
<rect x="1044" y="357.0" width="3" height="11.2" fill="#2ee93c"/>
<rect x="1040" y="362.5" width="1" height="25.5" fill="#2ee93c"/>
<rect x="1039" y="366.5" width="3" height="12.8" fill="#2ee93c"/>
<rect x="1036" y="375.0" width="1" height="13.9" fill="#2ee93c"/>
<rect x="1035" y="378.5" width="3" height="9.6" fill="#2ee93c"/>
<rect x="1031" y="384.8" width="1" height="19.1" fill="#2ee93c"/>
<rect x="1030" y="386.8" width="3" height="1.3" fill="#2ee93c"/>
<rect x="1026" y="380.9" width="1" height="26.3" fill="#ffffff"/>
<rect x="1025" y="385.6" width="3" height="2.1" fill="#ffffff"/>
<rect x="1022" y="384.8" width="1" height="18.3" fill="#2ee93c"/>
<rect x="1021" y="385.6" width="3" height="13.5" fill="#2ee93c"/>
<rect x="1017" y="358.5" width="1" height="41.4" fill="#ffffff"/>
<rect x="1016" y="362.5" width="3" height="36.7" fill="#ffffff"/>
<rect x="1013" y="341.2" width="1" height="28.2" fill="#ffffff"/>
<rect x="1012" y="342.8" width="3" height="20.7" fill="#ffffff"/>
<rect x="1008" y="338.0" width="1" height="10.7" fill="#2ee93c"/>
<rect x="1007" y="342.8" width="3" height="2.1" fill="#2ee93c"/>
<rect x="1003" y="342.3" width="1" height="9.2" fill="#2ee93c"/>
<rect x="1002" y="343.9" width="3" height="6.9" fill="#2ee93c"/>
<rect x="999" y="349.2" width="1" height="26.6" fill="#2ee93c"/>
<rect x="998" y="349.7" width="3" height="21.4" fill="#2ee93c"/>
<rect x="994" y="364.3" width="1" height="27.1" fill="#2ee93c"/>
<rect x="993" y="369.9" width="3" height="1.1" fill="#2ee93c"/>
<rect x="990" y="362.4" width="1" height="24.5" fill="#ffffff"/>
<rect x="989" y="367.2" width="3" height="4.3" fill="#ffffff"/>
<rect x="985" y="348.4" width="1" height="20.4" fill="#ffffff"/>
<rect x="984" y="350.8" width="3" height="17.5" fill="#ffffff"/>
<rect x="980" y="332.1" width="1" height="21.4" fill="#ffffff"/>
<rect x="979" y="338.8" width="3" height="12.0" fill="#ffffff"/>
<rect x="976" y="338.8" width="1" height="8.0" fill="#2ee93c"/>
<rect x="975" y="339.1" width="3" height="4.8" fill="#2ee93c"/>
<rect x="971" y="341.2" width="1" height="19.1" fill="#2ee93c"/>
<rect x="970" y="343.3" width="3" height="9.6" fill="#2ee93c"/>
<rect x="966" y="343.6" width="1" height="12.0" fill="#ffffff"/>
<rect x="965" y="344.4" width="3" height="8.4" fill="#ffffff"/>
<rect x="962" y="336.4" width="1" height="17.5" fill="#2ee93c"/>
<rect x="961" y="344.4" width="3" height="4.0" fill="#2ee93c"/>
<rect x="957" y="344.4" width="1" height="12.8" fill="#2ee93c"/>
<rect x="956" y="347.1" width="3" height="9.6" fill="#2ee93c"/>
<rect x="953" y="348.4" width="1" height="11.5" fill="#ffffff"/>
<rect x="952" y="349.7" width="3" height="7.5" fill="#ffffff"/>
<rect x="948" y="346.5" width="1" height="7.5" fill="#ffffff"/>
<rect x="947" y="348.7" width="3" height="1.6" fill="#ffffff"/>
<rect x="943" y="345.2" width="1" height="22.0" fill="#2ee93c"/>
<rect x="942" y="349.2" width="3" height="17.5" fill="#2ee93c"/>
<rect x="939" y="340.4" width="1" height="30.3" fill="#ffffff"/>
<rect x="938" y="342.0" width="3" height="24.7" fill="#ffffff"/>
<rect x="934" y="330.5" width="1" height="23.9" fill="#2ee93c"/>
<rect x="933" y="342.0" width="3" height="3.5" fill="#2ee93c"/>
<rect x="929" y="335.3" width="1" height="40.2" fill="#2ee93c"/>
<rect x="928" y="344.4" width="3" height="14.3" fill="#2ee93c"/>
<rect x="925" y="338.8" width="1" height="24.7" fill="#ffffff"/>
<rect x="924" y="339.6" width="3" height="19.1" fill="#ffffff"/>
<rect x="920" y="334.0" width="1" height="32.7" fill="#ffffff"/>
<rect x="919" y="336.9" width="3" height="3.8" fill="#ffffff"/>
<rect x="916" y="331.2" width="1" height="15.3" fill="#ffffff"/>
<rect x="915" y="335.6" width="3" height="1.6" fill="#ffffff"/>
<rect x="911" y="326.1" width="1" height="28.7" fill="#2ee93c"/>
<rect x="910" y="336.0" width="3" height="10.0" fill="#2ee93c"/>
<rect x="906" y="295.0" width="1" height="55.0" fill="#ffffff"/>
<rect x="905" y="298.2" width="3" height="47.8" fill="#ffffff"/>
<rect x="902" y="267.1" width="1" height="35.4" fill="#ffffff"/>
<rect x="901" y="269.0" width="3" height="30.0" fill="#ffffff"/>
<rect x="897" y="256.7" width="1" height="17.5" fill="#ffffff"/>
<rect x="896" y="259.9" width="3" height="9.6" fill="#ffffff"/>
<rect x="892" y="254.7" width="1" height="30.8" fill="#2ee93c"/>
<rect x="891" y="259.9" width="3" height="21.5" fill="#2ee93c"/>
<rect x="888" y="276.3" width="1" height="23.4" fill="#2ee93c"/>
<rect x="887" y="280.6" width="3" height="10.4" fill="#2ee93c"/>
<rect x="883" y="285.4" width="1" height="10.4" fill="#2ee93c"/>
<rect x="882" y="290.7" width="3" height="3.5" fill="#2ee93c"/>
<rect x="879" y="281.1" width="1" height="19.8" fill="#ffffff"/>
<rect x="878" y="287.8" width="3" height="5.6" fill="#ffffff"/>
<rect x="874" y="248.0" width="1" height="41.8" fill="#ffffff"/>
<rect x="873" y="256.7" width="3" height="31.9" fill="#ffffff"/>
<rect x="869" y="252.0" width="1" height="35.9" fill="#2ee93c"/>
<rect x="868" y="256.7" width="3" height="30.8" fill="#2ee93c"/>
<rect x="865" y="280.6" width="1" height="7.5" fill="#ffffff"/>
<rect x="864" y="284.9" width="3" height="2.9" fill="#ffffff"/>
<rect x="860" y="281.1" width="1" height="10.8" fill="#2ee93c"/>
<rect x="859" y="285.2" width="3" height="5.9" fill="#2ee93c"/>
<rect x="856" y="279.2" width="1" height="13.5" fill="#ffffff"/>
<rect x="855" y="280.0" width="3" height="11.2" fill="#ffffff"/>
<rect x="851" y="270.4" width="1" height="12.3" fill="#ffffff"/>
<rect x="850" y="274.4" width="3" height="6.1" fill="#ffffff"/>
<rect x="846" y="250.2" width="1" height="27.7" fill="#ffffff"/>
<rect x="845" y="251.3" width="3" height="23.4" fill="#ffffff"/>
<rect x="842" y="248.1" width="1" height="12.0" fill="#2ee93c"/>
<rect x="841" y="251.3" width="3" height="8.0" fill="#2ee93c"/>
<rect x="837" y="241.7" width="1" height="19.9" fill="#ffffff"/>
<rect x="836" y="242.9" width="3" height="16.4" fill="#ffffff"/>
<rect x="832" y="232.7" width="1" height="23.9" fill="#2ee93c"/>
<rect x="831" y="242.9" width="3" height="11.2" fill="#2ee93c"/>
<rect x="828" y="249.2" width="1" height="13.7" fill="#2ee93c"/>
<rect x="827" y="252.9" width="3" height="2.7" fill="#2ee93c"/>
<rect x="823" y="251.3" width="1" height="16.4" fill="#2ee93c"/>
<rect x="822" y="255.0" width="3" height="11.2" fill="#2ee93c"/>
<rect x="819" y="240.1" width="1" height="27.6" fill="#ffffff"/>
<rect x="818" y="241.7" width="3" height="24.4" fill="#ffffff"/>
<rect x="814" y="237.0" width="1" height="7.2" fill="#2ee93c"/>
<rect x="813" y="240.9" width="3" height="1.9" fill="#2ee93c"/>
<rect x="809" y="237.0" width="1" height="10.7" fill="#ffffff"/>
<rect x="808" y="237.8" width="3" height="6.1" fill="#ffffff"/>
<rect x="805" y="230.1" width="1" height="26.5" fill="#2ee93c"/>
<rect x="804" y="237.8" width="3" height="12.0" fill="#2ee93c"/>
<rect x="800" y="239.0" width="1" height="15.0" fill="#2ee93c"/>
<rect x="799" y="248.9" width="3" height="1.6" fill="#2ee93c"/>
<rect x="795" y="249.7" width="1" height="19.1" fill="#2ee93c"/>
<rect x="794" y="250.2" width="3" height="16.6" fill="#2ee93c"/>
<rect x="791" y="254.5" width="1" height="33.5" fill="#2ee93c"/>
<rect x="790" y="266.1" width="3" height="21.4" fill="#2ee93c"/>
<rect x="786" y="285.6" width="1" height="13.1" fill="#2ee93c"/>
<rect x="785" y="286.8" width="3" height="1.9" fill="#2ee93c"/>
<rect x="782" y="288.0" width="1" height="13.9" fill="#2ee93c"/>
<rect x="781" y="288.8" width="3" height="12.4" fill="#2ee93c"/>
<rect x="777" y="293.2" width="1" height="10.7" fill="#ffffff"/>
<rect x="776" y="293.9" width="3" height="7.3" fill="#ffffff"/>
<rect x="772" y="291.1" width="1" height="7.2" fill="#2ee93c"/>
<rect x="771" y="293.9" width="3" height="3.7" fill="#2ee93c"/>
<rect x="768" y="293.2" width="1" height="10.7" fill="#2ee93c"/>
<rect x="767" y="297.0" width="3" height="3.7" fill="#2ee93c"/>
<rect x="763" y="291.1" width="1" height="10.7" fill="#ffffff"/>
<rect x="762" y="291.6" width="3" height="9.1" fill="#ffffff"/>
<rect x="759" y="276.8" width="1" height="15.1" fill="#ffffff"/>
<rect x="758" y="283.2" width="3" height="8.4" fill="#ffffff"/>
<rect x="754" y="272.8" width="1" height="15.9" fill="#ffffff"/>
<rect x="753" y="281.1" width="3" height="2.6" fill="#ffffff"/>
<rect x="749" y="277.9" width="1" height="14.8" fill="#2ee93c"/>
<rect x="748" y="280.8" width="3" height="6.4" fill="#2ee93c"/>
<rect x="745" y="276.0" width="1" height="11.2" fill="#ffffff"/>
<rect x="744" y="283.2" width="3" height="3.2" fill="#ffffff"/>
<rect x="740" y="282.4" width="1" height="43.4" fill="#2ee93c"/>
<rect x="739" y="283.2" width="3" height="37.5" fill="#2ee93c"/>
<rect x="735" y="315.9" width="1" height="28.7" fill="#2ee93c"/>
<rect x="734" y="319.8" width="3" height="10.0" fill="#2ee93c"/>
<rect x="731" y="303.9" width="1" height="34.0" fill="#ffffff"/>
<rect x="730" y="304.7" width="3" height="25.2" fill="#ffffff"/>
<rect x="726" y="302.3" width="1" height="11.2" fill="#2ee93c"/>
<rect x="725" y="304.7" width="3" height="3.2" fill="#2ee93c"/>
<rect x="722" y="303.1" width="1" height="22.0" fill="#2ee93c"/>
<rect x="721" y="307.1" width="3" height="8.8" fill="#2ee93c"/>
<rect x="717" y="310.3" width="1" height="11.6" fill="#ffffff"/>
<rect x="716" y="312.7" width="3" height="3.2" fill="#ffffff"/>
<rect x="712" y="306.3" width="1" height="26.3" fill="#2ee93c"/>
<rect x="711" y="312.7" width="3" height="7.2" fill="#2ee93c"/>
<rect x="708" y="292.7" width="1" height="32.4" fill="#ffffff"/>
<rect x="707" y="295.1" width="3" height="24.7" fill="#ffffff"/>
<rect x="703" y="291.1" width="1" height="12.0" fill="#2ee93c"/>
<rect x="702" y="295.1" width="3" height="4.8" fill="#2ee93c"/>
<rect x="698" y="281.1" width="1" height="22.8" fill="#ffffff"/>
<rect x="697" y="286.4" width="3" height="13.5" fill="#ffffff"/>
<rect x="694" y="282.4" width="1" height="18.3" fill="#2ee93c"/>
<rect x="693" y="285.6" width="3" height="3.2" fill="#2ee93c"/>
<rect x="689" y="275.2" width="1" height="15.5" fill="#ffffff"/>
<rect x="688" y="280.8" width="3" height="8.0" fill="#ffffff"/>
<rect x="685" y="275.2" width="1" height="26.3" fill="#2ee93c"/>
<rect x="684" y="280.8" width="3" height="15.1" fill="#2ee93c"/>
<rect x="680" y="294.3" width="1" height="21.5" fill="#2ee93c"/>
<rect x="679" y="295.1" width="3" height="19.1" fill="#2ee93c"/>
<rect x="675" y="311.9" width="1" height="12.8" fill="#ffffff"/>
<rect x="674" y="311.9" width="3" height="1.6" fill="#ffffff"/>
<rect x="671" y="304.7" width="1" height="13.5" fill="#ffffff"/>
<rect x="670" y="311.1" width="3" height="1.3" fill="#ffffff"/>
<rect x="666" y="311.1" width="1" height="40.6" fill="#2ee93c"/>
<rect x="665" y="311.9" width="3" height="11.2" fill="#2ee93c"/>
<rect x="662" y="318.2" width="1" height="60.6" fill="#2ee93c"/>
<rect x="661" y="322.2" width="3" height="14.3" fill="#2ee93c"/>
<rect x="657" y="264.8" width="1" height="72.5" fill="#ffffff"/>
<rect x="656" y="267.2" width="3" height="69.3" fill="#ffffff"/>
<rect x="652" y="247.5" width="1" height="30.3" fill="#ffffff"/>
<rect x="651" y="262.3" width="3" height="5.9" fill="#ffffff"/>
<rect x="648" y="261.1" width="1" height="19.9" fill="#2ee93c"/>
<rect x="647" y="262.3" width="3" height="9.9" fill="#2ee93c"/>
<rect x="643" y="233.2" width="1" height="43.0" fill="#ffffff"/>
<rect x="642" y="235.6" width="3" height="35.9" fill="#ffffff"/>
<rect x="638" y="231.3" width="1" height="21.8" fill="#2ee93c"/>
<rect x="637" y="236.4" width="3" height="8.0" fill="#2ee93c"/>
<rect x="634" y="235.6" width="1" height="19.9" fill="#ffffff"/>
<rect x="633" y="237.2" width="3" height="7.2" fill="#ffffff"/>
<rect x="629" y="225.2" width="1" height="28.7" fill="#2ee93c"/>
<rect x="628" y="237.2" width="3" height="11.6" fill="#2ee93c"/>
<rect x="625" y="209.3" width="1" height="40.6" fill="#ffffff"/>
<rect x="624" y="217.2" width="3" height="31.6" fill="#ffffff"/>
<rect x="620" y="210.1" width="1" height="19.9" fill="#ffffff"/>
<rect x="619" y="216.4" width="3" height="1.6" fill="#ffffff"/>
<rect x="615" y="204.2" width="1" height="19.4" fill="#ffffff"/>
<rect x="614" y="210.9" width="3" height="7.2" fill="#ffffff"/>
<rect x="611" y="167.0" width="1" height="46.2" fill="#ffffff"/>
<rect x="610" y="168.6" width="3" height="43.5" fill="#ffffff"/>
<rect x="606" y="167.0" width="1" height="17.5" fill="#2ee93c"/>
<rect x="605" y="169.4" width="3" height="13.5" fill="#2ee93c"/>
<rect x="601" y="179.8" width="1" height="5.6" fill="#2ee93c"/>
<rect x="600" y="182.2" width="3" height="1.6" fill="#2ee93c"/>
<rect x="597" y="171.8" width="1" height="13.5" fill="#ffffff"/>
<rect x="596" y="172.6" width="3" height="10.4" fill="#ffffff"/>
<rect x="592" y="167.8" width="1" height="14.3" fill="#ffffff"/>
<rect x="591" y="169.4" width="3" height="4.0" fill="#ffffff"/>
<rect x="588" y="167.0" width="1" height="10.4" fill="#2ee93c"/>
<rect x="587" y="169.4" width="3" height="7.2" fill="#2ee93c"/>
<rect x="583" y="175.0" width="1" height="4.8" fill="#2ee93c"/>
<rect x="582" y="175.8" width="3" height="2.4" fill="#2ee93c"/>
<rect x="578" y="173.4" width="1" height="6.4" fill="#ffffff"/>
<rect x="577" y="175.5" width="3" height="2.2" fill="#ffffff"/>
<rect x="574" y="167.8" width="1" height="12.0" fill="#ffffff"/>
<rect x="573" y="171.8" width="3" height="4.0" fill="#ffffff"/>
<rect x="569" y="169.7" width="1" height="8.4" fill="#2ee93c"/>
<rect x="568" y="171.0" width="3" height="6.4" fill="#2ee93c"/>
<rect x="564" y="175.0" width="1" height="7.2" fill="#2ee93c"/>
<rect x="563" y="175.8" width="3" height="5.6" fill="#2ee93c"/>
<rect x="560" y="178.2" width="1" height="6.4" fill="#ffffff"/>
<rect x="559" y="179.8" width="3" height="1.6" fill="#ffffff"/>
<rect x="555" y="179.0" width="1" height="8.8" fill="#2ee93c"/>
<rect x="554" y="179.8" width="3" height="5.6" fill="#2ee93c"/>
<rect x="551" y="172.9" width="1" height="13.2" fill="#ffffff"/>
<rect x="550" y="173.9" width="3" height="11.5" fill="#ffffff"/>
<rect x="546" y="169.1" width="1" height="25.0" fill="#2ee93c"/>
<rect x="545" y="174.2" width="3" height="8.8" fill="#2ee93c"/>
<rect x="541" y="174.2" width="1" height="13.5" fill="#ffffff"/>
<rect x="540" y="175.8" width="3" height="6.4" fill="#ffffff"/>
<rect x="537" y="175.0" width="1" height="15.9" fill="#2ee93c"/>
<rect x="536" y="175.8" width="3" height="13.5" fill="#2ee93c"/>
<rect x="532" y="176.6" width="1" height="13.5" fill="#2ee93c"/>
<rect x="531" y="187.7" width="3" height="1.6" fill="#2ee93c"/>
<rect x="528" y="179.8" width="1" height="15.9" fill="#2ee93c"/>
<rect x="527" y="187.7" width="3" height="7.2" fill="#2ee93c"/>
<rect x="523" y="193.3" width="1" height="32.7" fill="#2ee93c"/>
<rect x="522" y="194.1" width="3" height="31.1" fill="#2ee93c"/>
<rect x="518" y="194.9" width="1" height="31.1" fill="#ffffff"/>
<rect x="517" y="202.1" width="3" height="23.1" fill="#ffffff"/>
<rect x="514" y="175.0" width="1" height="31.1" fill="#ffffff"/>
<rect x="513" y="175.8" width="3" height="27.1" fill="#ffffff"/>
<rect x="509" y="159.8" width="1" height="17.5" fill="#ffffff"/>
<rect x="508" y="160.6" width="3" height="15.9" fill="#ffffff"/>
<rect x="504" y="159.8" width="1" height="26.3" fill="#2ee93c"/>
<rect x="503" y="160.6" width="3" height="2.4" fill="#2ee93c"/>
<rect x="500" y="159.1" width="1" height="14.3" fill="#2ee93c"/>
<rect x="499" y="160.6" width="3" height="10.4" fill="#2ee93c"/>
<rect x="495" y="155.1" width="1" height="21.5" fill="#ffffff"/>
<rect x="494" y="169.4" width="3" height="1.6" fill="#ffffff"/>
<rect x="491" y="142.3" width="1" height="43.8" fill="#ffffff"/>
<rect x="490" y="158.3" width="3" height="12.8" fill="#ffffff"/>
<rect x="486" y="139.9" width="1" height="20.7" fill="#ffffff"/>
<rect x="485" y="143.1" width="3" height="15.9" fill="#ffffff"/>
<rect x="481" y="139.1" width="1" height="10.4" fill="#ffffff"/>
<rect x="480" y="139.9" width="3" height="1.6" fill="#ffffff"/>
<rect x="477" y="139.1" width="1" height="9.6" fill="#2ee93c"/>
<rect x="476" y="139.9" width="3" height="8.0" fill="#2ee93c"/>
<rect x="472" y="143.9" width="1" height="10.4" fill="#2ee93c"/>
<rect x="471" y="146.3" width="3" height="5.6" fill="#2ee93c"/>
<rect x="467" y="135.6" width="1" height="27.1" fill="#ffffff"/>
<rect x="466" y="136.4" width="3" height="15.1" fill="#ffffff"/>
<rect x="463" y="109.3" width="1" height="29.5" fill="#ffffff"/>
<rect x="462" y="122.0" width="3" height="15.1" fill="#ffffff"/>
<rect x="458" y="102.9" width="1" height="25.5" fill="#ffffff"/>
<rect x="457" y="118.0" width="3" height="4.8" fill="#ffffff"/>
<rect x="454" y="112.5" width="1" height="8.0" fill="#ffffff"/>
<rect x="453" y="116.4" width="3" height="2.4" fill="#ffffff"/>
<rect x="449" y="114.8" width="1" height="14.3" fill="#2ee93c"/>
<rect x="448" y="116.4" width="3" height="7.2" fill="#2ee93c"/>
<rect x="444" y="110.9" width="1" height="18.3" fill="#ffffff"/>
<rect x="443" y="115.6" width="3" height="8.0" fill="#ffffff"/>
<rect x="440" y="97.3" width="1" height="25.5" fill="#ffffff"/>
<rect x="439" y="98.1" width="3" height="19.1" fill="#ffffff"/>
<rect x="435" y="88.5" width="1" height="15.9" fill="#2ee93c"/>
<rect x="434" y="98.1" width="3" height="5.6" fill="#2ee93c"/>
<rect x="431" y="100.5" width="1" height="15.1" fill="#2ee93c"/>
<rect x="430" y="102.9" width="3" height="4.0" fill="#2ee93c"/>
<rect x="426" y="95.7" width="1" height="17.5" fill="#ffffff"/>
<rect x="425" y="96.5" width="3" height="9.6" fill="#ffffff"/>
<rect x="421" y="82.7" width="1" height="15.5" fill="#ffffff"/>
<rect x="420" y="95.7" width="3" height="1.6" fill="#ffffff"/>
<rect x="417" y="90.1" width="1" height="19.1" fill="#2ee93c"/>
<rect x="416" y="95.7" width="3" height="12.8" fill="#2ee93c"/>
<rect x="412" y="102.1" width="1" height="28.7" fill="#2ee93c"/>
<rect x="411" y="106.9" width="3" height="23.1" fill="#2ee93c"/>
<rect x="407" y="126.0" width="1" height="8.8" fill="#ffffff"/>
<rect x="406" y="126.8" width="3" height="3.2" fill="#ffffff"/>
<rect x="403" y="121.2" width="1" height="15.1" fill="#2ee93c"/>
<rect x="402" y="126.8" width="3" height="8.8" fill="#2ee93c"/>
<rect x="398" y="131.6" width="1" height="27.9" fill="#2ee93c"/>
<rect x="397" y="134.8" width="3" height="23.9" fill="#2ee93c"/>
<rect x="394" y="157.1" width="1" height="7.2" fill="#2ee93c"/>
<rect x="393" y="157.9" width="3" height="6.4" fill="#2ee93c"/>
<rect x="389" y="156.3" width="1" height="9.6" fill="#ffffff"/>
<rect x="388" y="157.9" width="3" height="6.4" fill="#ffffff"/>
<rect x="384" y="155.5" width="1" height="6.4" fill="#ffffff"/>
<rect x="383" y="158.7" width="3" height="1.6" fill="#ffffff"/>
<rect x="380" y="153.9" width="1" height="10.4" fill="#2ee93c"/>
<rect x="379" y="158.7" width="3" height="4.8" fill="#2ee93c"/>
<rect x="375" y="157.1" width="1" height="8.0" fill="#ffffff"/>
<rect x="374" y="161.1" width="3" height="3.2" fill="#ffffff"/>
<rect x="370" y="157.1" width="1" height="8.0" fill="#2ee93c"/>
<rect x="369" y="161.1" width="3" height="3.2" fill="#2ee93c"/>
<rect x="366" y="153.9" width="1" height="12.8" fill="#2ee93c"/>
<rect x="365" y="161.9" width="3" height="4.0" fill="#2ee93c"/>
<rect x="361" y="161.9" width="1" height="6.4" fill="#ffffff"/>
<rect x="360" y="162.7" width="3" height="4.0" fill="#ffffff"/>
<rect x="357" y="159.5" width="1" height="7.2" fill="#2ee93c"/>
<rect x="356" y="161.9" width="3" height="4.0" fill="#2ee93c"/>
<rect x="352" y="161.1" width="1" height="18.3" fill="#2ee93c"/>
<rect x="351" y="165.9" width="3" height="9.6" fill="#2ee93c"/>
<rect x="347" y="139.6" width="1" height="38.3" fill="#ffffff"/>
<rect x="346" y="159.5" width="3" height="15.9" fill="#ffffff"/>
<rect x="343" y="153.9" width="1" height="9.6" fill="#ffffff"/>
<rect x="342" y="157.9" width="3" height="1.6" fill="#ffffff"/>
<rect x="338" y="149.1" width="1" height="25.5" fill="#2ee93c"/>
<rect x="337" y="158.7" width="3" height="15.1" fill="#2ee93c"/>
<rect x="333" y="172.2" width="1" height="10.4" fill="#2ee93c"/>
<rect x="332" y="173.0" width="3" height="8.8" fill="#2ee93c"/>
<rect x="329" y="179.4" width="1" height="10.4" fill="#ffffff"/>
<rect x="328" y="180.2" width="3" height="1.6" fill="#ffffff"/>
<rect x="324" y="161.9" width="1" height="22.3" fill="#ffffff"/>
<rect x="323" y="176.2" width="3" height="5.6" fill="#ffffff"/>
<rect x="320" y="173.8" width="1" height="17.5" fill="#2ee93c"/>
<rect x="319" y="175.4" width="3" height="5.6" fill="#2ee93c"/>
<rect x="315" y="169.0" width="1" height="15.9" fill="#ffffff"/>
<rect x="314" y="174.6" width="3" height="6.4" fill="#ffffff"/>
<rect x="310" y="171.4" width="1" height="19.1" fill="#2ee93c"/>
<rect x="309" y="174.6" width="3" height="15.1" fill="#2ee93c"/>
<rect x="306" y="187.4" width="1" height="8.0" fill="#2ee93c"/>
<rect x="305" y="188.2" width="3" height="5.6" fill="#2ee93c"/>
<rect x="301" y="190.6" width="1" height="27.1" fill="#2ee93c"/>
<rect x="300" y="193.7" width="3" height="1.6" fill="#2ee93c"/>
<rect x="297" y="180.2" width="1" height="19.9" fill="#ffffff"/>
<rect x="296" y="185.0" width="3" height="10.4" fill="#ffffff"/>
<rect x="292" y="180.2" width="1" height="20.7" fill="#2ee93c"/>
<rect x="291" y="185.0" width="3" height="4.0" fill="#2ee93c"/>
<rect x="287" y="178.6" width="1" height="24.7" fill="#ffffff"/>
<rect x="286" y="179.4" width="3" height="9.6" fill="#ffffff"/>
<rect x="283" y="175.4" width="1" height="10.4" fill="#2ee93c"/>
<rect x="282" y="178.6" width="3" height="4.0" fill="#2ee93c"/>
<rect x="278" y="173.0" width="1" height="17.5" fill="#ffffff"/>
<rect x="277" y="177.8" width="3" height="4.0" fill="#ffffff"/>
<rect x="273" y="145.9" width="1" height="35.1" fill="#ffffff"/>
<rect x="272" y="146.7" width="3" height="31.9" fill="#ffffff"/>
<rect x="269" y="119.6" width="1" height="31.9" fill="#ffffff"/>
<rect x="268" y="126.0" width="3" height="22.3" fill="#ffffff"/>
<rect x="264" y="125.2" width="1" height="57.4" fill="#2ee93c"/>
<rect x="263" y="126.0" width="3" height="47.8" fill="#2ee93c"/>
<rect x="260" y="170.6" width="1" height="12.8" fill="#ffffff"/>
<rect x="259" y="172.2" width="3" height="1.6" fill="#ffffff"/>
<rect x="255" y="164.3" width="1" height="21.5" fill="#ffffff"/>
<rect x="254" y="165.1" width="3" height="8.8" fill="#ffffff"/>
<rect x="250" y="149.1" width="1" height="17.5" fill="#ffffff"/>
<rect x="249" y="150.7" width="3" height="15.1" fill="#ffffff"/>
<rect x="246" y="145.1" width="1" height="8.0" fill="#ffffff"/>
<rect x="245" y="149.1" width="3" height="3.2" fill="#ffffff"/>
<rect x="241" y="145.1" width="1" height="19.1" fill="#ffffff"/>
<rect x="240" y="145.1" width="3" height="7.2" fill="#ffffff"/>
<rect x="236" y="133.2" width="1" height="13.5" fill="#ffffff"/>
<rect x="235" y="134.0" width="3" height="12.0" fill="#ffffff"/>
<rect x="232" y="128.4" width="1" height="9.6" fill="#ffffff"/>
<rect x="231" y="131.6" width="3" height="5.6" fill="#ffffff"/>
<rect x="227" y="125.2" width="1" height="14.3" fill="#2ee93c"/>
<rect x="226" y="130.8" width="3" height="8.0" fill="#2ee93c"/>
<rect x="223" y="135.6" width="1" height="33.5" fill="#2ee93c"/>
<rect x="222" y="138.8" width="3" height="11.2" fill="#2ee93c"/>
<rect x="218" y="138.0" width="1" height="15.9" fill="#ffffff"/>
<rect x="217" y="149.1" width="3" height="1.6" fill="#ffffff"/>
<rect x="213" y="139.6" width="1" height="16.7" fill="#2ee93c"/>
<rect x="212" y="149.1" width="3" height="2.4" fill="#2ee93c"/>
<rect x="209" y="145.9" width="1" height="23.1" fill="#2ee93c"/>
<rect x="208" y="150.7" width="3" height="15.1" fill="#2ee93c"/>
<rect x="204" y="157.1" width="1" height="31.9" fill="#2ee93c"/>
<rect x="203" y="165.1" width="3" height="9.6" fill="#2ee93c"/>
<rect x="200" y="166.6" width="1" height="10.4" fill="#ffffff"/>
<rect x="199" y="169.0" width="3" height="3.2" fill="#ffffff"/>
<rect x="195" y="168.2" width="1" height="13.5" fill="#2ee93c"/>
<rect x="194" y="169.0" width="3" height="5.6" fill="#2ee93c"/>
<rect x="190" y="169.0" width="1" height="8.8" fill="#ffffff"/>
<rect x="189" y="171.4" width="3" height="3.2" fill="#ffffff"/>
<rect x="186" y="170.6" width="1" height="11.2" fill="#2ee93c"/>
<rect x="185" y="171.4" width="3" height="5.6" fill="#2ee93c"/>
<rect x="181" y="171.4" width="1" height="11.2" fill="#ffffff"/>
<rect x="180" y="174.6" width="3" height="2.4" fill="#ffffff"/>
<rect x="176" y="169.0" width="1" height="10.4" fill="#ffffff"/>
<rect x="175" y="172.2" width="3" height="4.0" fill="#ffffff"/>
<rect x="172" y="164.3" width="1" height="20.7" fill="#2ee93c"/>
<rect x="171" y="172.2" width="3" height="6.4" fill="#2ee93c"/>
<rect x="167" y="175.4" width="1" height="15.1" fill="#2ee93c"/>
<rect x="166" y="177.8" width="3" height="11.2" fill="#2ee93c"/>
<rect x="163" y="174.6" width="1" height="15.9" fill="#2ee93c"/>
<rect x="162" y="187.4" width="3" height="2.4" fill="#2ee93c"/>
<rect x="158" y="183.4" width="1" height="17.5" fill="#2ee93c"/>
<rect x="157" y="189.0" width="3" height="8.0" fill="#2ee93c"/>
<rect x="153" y="192.9" width="1" height="23.9" fill="#2ee93c"/>
<rect x="152" y="196.1" width="3" height="5.6" fill="#2ee93c"/>
<rect x="149" y="191.4" width="1" height="35.1" fill="#2ee93c"/>
<rect x="148" y="200.9" width="3" height="5.6" fill="#2ee93c"/>
<rect x="144" y="161.9" width="1" height="45.4" fill="#ffffff"/>
<rect x="143" y="162.7" width="3" height="43.8" fill="#ffffff"/>
<rect x="139" y="158.7" width="1" height="15.1" fill="#2ee93c"/>
<rect x="138" y="162.7" width="3" height="10.4" fill="#2ee93c"/>
<rect x="135" y="170.6" width="1" height="17.5" fill="#2ee93c"/>
<rect x="134" y="171.4" width="3" height="8.8" fill="#2ee93c"/>
<rect x="130" y="167.4" width="1" height="15.9" fill="#ffffff"/>
<rect x="129" y="169.0" width="3" height="11.2" fill="#ffffff"/>
<rect x="126" y="126.0" width="1" height="46.2" fill="#ffffff"/>
<rect x="125" y="130.0" width="3" height="39.1" fill="#ffffff"/>
<rect x="121" y="129.2" width="1" height="31.9" fill="#2ee93c"/>
<rect x="120" y="130.8" width="3" height="11.2" fill="#2ee93c"/>
<rect x="116" y="134.0" width="1" height="11.2" fill="#ffffff"/>
<rect x="115" y="138.8" width="3" height="3.2" fill="#ffffff"/>
<rect x="112" y="137.2" width="1" height="14.3" fill="#2ee93c"/>
<rect x="111" y="138.8" width="3" height="12.0" fill="#2ee93c"/>
<rect x="107" y="145.1" width="1" height="15.9" fill="#2ee93c"/>
<rect x="106" y="146.7" width="3" height="4.0" fill="#2ee93c"/>
<rect x="103" y="145.9" width="1" height="18.3" fill="#2ee93c"/>
<rect x="102" y="146.7" width="3" height="4.0" fill="#2ee93c"/>
<rect x="98" y="120.4" width="1" height="35.1" fill="#ffffff"/>
<rect x="97" y="122.0" width="3" height="29.5" fill="#ffffff"/>
<rect x="93" y="94.1" width="1" height="30.3" fill="#ffffff"/>
<rect x="92" y="115.6" width="3" height="7.2" fill="#ffffff"/>
<rect x="89" y="114.1" width="1" height="13.5" fill="#2ee93c"/>
<rect x="88" y="115.6" width="3" height="7.2" fill="#2ee93c"/>
<rect x="84" y="109.3" width="1" height="13.5" fill="#ffffff"/>
<rect x="83" y="114.8" width="3" height="4.8" fill="#ffffff"/>
<rect x="79" y="110.1" width="1" height="12.8" fill="#2ee93c"/>
<rect x="78" y="115.6" width="3" height="6.4" fill="#2ee93c"/>
<rect x="75" y="114.8" width="1" height="19.1" fill="#2ee93c"/>
<rect x="74" y="120.4" width="3" height="6.4" fill="#2ee93c"/>
<rect x="70" y="122.8" width="1" height="48.6" fill="#2ee93c"/>
<rect x="69" y="124.4" width="3" height="29.5" fill="#2ee93c"/>
<rect x="66" y="149.9" width="1" height="23.9" fill="#ffffff"/>
<rect x="65" y="151.5" width="3" height="2.4" fill="#ffffff"/>
<rect x="61" y="106.1" width="1" height="48.6" fill="#ffffff"/>
<rect x="60" y="106.9" width="3" height="45.4" fill="#ffffff"/>
<rect x="56" y="83.0" width="1" height="25.5" fill="#ffffff"/>
<rect x="55" y="86.2" width="3" height="20.7" fill="#ffffff"/>
<rect x="52" y="71.8" width="1" height="15.9" fill="#ffffff"/>
<rect x="51" y="83.0" width="3" height="4.0" fill="#ffffff"/>
<rect x="47" y="79.8" width="1" height="33.5" fill="#2ee93c"/>
<rect x="46" y="83.8" width="3" height="28.7" fill="#2ee93c"/>
<rect x="42" y="111.7" width="1" height="19.9" fill="#2ee93c"/>
<rect x="41" y="112.5" width="3" height="14.3" fill="#2ee93c"/>
<rect x="38" y="98.9" width="1" height="36.7" fill="#ffffff"/>
<rect x="37" y="102.1" width="3" height="25.5" fill="#ffffff"/>
<rect x="33" y="97.3" width="1" height="19.1" fill="#2ee93c"/>
<rect x="32" y="102.1" width="3" height="10.4" fill="#2ee93c"/>
<rect x="29" y="89.3" width="1" height="25.5" fill="#ffffff"/>
<rect x="28" y="90.9" width="3" height="22.3" fill="#ffffff"/>
<rect x="24" y="97.3" width="1" height="30.3" fill="#2ee93c"/>
<rect x="23" y="109.3" width="3" height="5.6" fill="#2ee93c"/>
<rect x="19" y="111.7" width="1" height="47.8" fill="#2ee93c"/>
<rect x="18" y="113.3" width="3" height="25.5" fill="#2ee93c"/>
<rect x="15" y="126.0" width="1" height="70.9" fill="#2ee93c"/>
<rect x="14" y="138.8" width="3" height="53.4" fill="#2ee93c"/>
<rect x="10" y="178.6" width="1" height="15.1" fill="#ffffff"/>
<rect x="9" y="178.6" width="3" height="12.8" fill="#ffffff"/>
</g>
<path d="M10.0 228.0 C11.1 225.9 14.5 220.6 16.4 215.3 C18.2 210.0 19.6 203.6 21.2 196.1 C22.8 188.7 24.3 178.1 25.9 170.6 C27.5 163.2 29.1 158.1 30.7 151.5 C32.3 144.9 33.9 137.2 35.5 130.8 C37.1 124.4 38.7 118.6 40.3 113.3 C41.9 107.9 43.5 103.2 45.1 98.9 C46.7 94.7 48.4 90.7 49.8 87.8 C51.3 84.8 52.8 82.6 53.8 81.4 C54.9 80.2 54.8 79.3 56.2 80.6 C57.7 81.9 60.7 85.8 62.6 89.3 C64.5 92.9 65.5 98.4 67.4 102.1 C69.2 105.8 71.6 109.0 73.8 111.7 C75.9 114.3 77.5 115.9 80.1 118.0 C82.8 120.2 86.5 122.4 89.7 124.4 C92.9 126.4 96.1 128.1 99.3 130.0 C102.4 131.8 105.6 133.6 108.8 135.6 C112.0 137.6 115.5 139.6 118.4 141.9 C121.3 144.3 123.7 146.7 126.4 149.9 C129.0 153.1 131.9 157.6 134.3 161.1 C136.7 164.5 138.6 166.9 140.7 170.6 C142.8 174.4 145.0 179.7 147.1 183.4 C149.2 187.1 151.3 190.2 153.5 192.9 C155.6 195.7 157.7 198.5 159.8 200.1 C162.0 201.7 164.1 202.6 166.2 202.5 C168.3 202.4 170.5 200.8 172.6 199.3 C174.7 197.9 176.8 195.9 179.0 193.7 C181.1 191.6 182.9 189.1 185.3 186.6 C187.7 184.0 190.6 181.0 193.3 178.6 C196.0 176.2 198.6 174.4 201.3 172.2 C203.9 170.1 206.6 168.5 209.2 165.9 C211.9 163.2 214.6 159.5 217.2 156.3 C219.9 153.1 222.5 149.6 225.2 146.7 C227.8 143.8 230.7 140.7 233.1 138.8 C235.6 136.8 238.9 135.3 240.0 134.8 C241.1 134.2 238.9 135.3 240.0 135.6 C241.1 135.8 244.3 135.3 246.4 136.4 C248.5 137.4 250.6 139.7 252.8 141.9 C254.9 144.2 257.3 148.1 259.1 149.9 C261.0 151.8 262.0 152.3 263.9 153.1 C265.8 153.9 268.2 153.4 270.3 154.7 C272.4 156.0 274.5 158.4 276.7 161.1 C278.8 163.7 280.9 167.4 283.0 170.6 C285.2 173.8 287.3 177.5 289.4 180.2 C291.5 182.9 293.7 184.6 295.8 186.6 C297.9 188.6 300.0 190.7 302.2 192.2 C304.3 193.6 306.4 194.9 308.5 195.3 C310.7 195.7 312.8 195.2 314.9 194.5 C317.0 193.9 319.2 192.4 321.3 191.4 C323.4 190.3 325.5 189.5 327.7 188.2 C329.8 186.8 331.9 185.2 334.0 183.4 C336.2 181.5 338.3 179.3 340.4 177.0 C342.5 174.8 344.9 171.7 346.8 169.8 C348.7 168.0 349.7 167.1 351.6 165.9 C353.4 164.6 355.8 163.1 357.9 162.3 C360.1 161.5 361.9 161.4 364.3 161.1 C366.7 160.7 369.6 160.6 372.3 160.3 C375.0 160.0 377.6 159.4 380.3 159.2 C382.9 158.9 385.8 159.0 388.2 158.7 C390.6 158.3 392.5 158.3 394.6 157.1 C396.7 155.9 398.9 154.0 401.0 151.5 C403.1 149.0 405.2 145.7 407.4 141.9 C409.5 138.2 411.6 133.7 413.7 129.2 C415.9 124.7 418.0 119.4 420.1 114.8 C422.2 110.3 424.4 105.7 426.5 102.1 C428.6 98.5 430.7 95.2 432.9 93.3 C435.0 91.5 437.1 91.1 439.2 90.9 C441.4 90.8 443.5 91.5 445.6 92.5 C447.7 93.6 449.9 95.3 452.0 97.3 C454.1 99.3 456.2 101.6 458.4 104.5 C460.5 107.4 462.8 111.0 464.7 114.8 C466.7 118.7 469.1 125.9 470.0 127.6 C470.9 129.3 469.2 123.9 470.0 124.8 C470.8 125.6 473.2 130.1 474.8 132.8 C476.4 135.4 477.7 137.8 479.6 140.7 C481.4 143.6 483.5 146.8 485.9 150.3 C488.3 153.7 491.3 158.5 493.9 161.4 C496.6 164.4 499.2 165.7 501.9 167.8 C504.5 169.9 507.7 171.9 509.8 174.2 C512.0 176.5 513.0 178.4 514.6 181.4 C516.2 184.3 517.8 188.7 519.4 191.7 C521.0 194.8 522.6 197.7 524.2 199.7 C525.8 201.7 527.5 202.8 529.0 203.7 C530.4 204.5 531.4 204.9 533.0 204.8 C534.6 204.7 536.5 204.0 538.5 202.9 C540.5 201.8 542.8 199.8 544.9 198.1 C547.0 196.4 549.2 194.4 551.3 192.5 C553.4 190.7 555.5 188.8 557.7 186.9 C559.8 185.1 561.9 183.0 564.0 181.4 C566.2 179.7 568.0 178.3 570.4 177.1 C572.8 175.9 575.7 174.9 578.4 174.2 C581.0 173.4 583.7 173.0 586.4 172.6 C589.0 172.2 591.9 171.9 594.3 171.8 C596.7 171.7 598.6 172.0 600.7 172.3 C602.8 172.5 605.2 172.5 607.1 173.4 C608.9 174.2 610.3 175.4 611.9 177.4 C613.5 179.4 615.0 182.2 616.6 185.3 C618.2 188.5 619.8 192.3 621.4 196.5 C623.0 200.8 624.6 206.3 626.2 210.9 C627.8 215.4 629.4 219.6 631.0 223.6 C632.6 227.6 634.2 231.3 635.8 234.8 C637.4 238.2 639.0 240.9 640.5 244.3 C642.1 247.8 643.7 251.8 645.3 255.5 C646.9 259.2 648.5 262.9 650.1 266.6 C651.7 270.4 651.8 269.9 654.9 277.8 C658.0 285.7 665.6 306.6 668.7 314.3 C671.8 321.9 671.9 321.4 673.5 323.8 C675.1 326.2 676.7 327.9 678.3 328.6 C679.8 329.3 681.4 329.1 683.0 328.3 C684.6 327.5 686.0 325.9 687.8 323.8 C689.7 321.7 692.1 318.5 694.2 315.9 C696.3 313.2 698.7 309.9 700.6 307.9 C702.4 305.9 703.8 304.7 705.3 303.9 C706.9 303.0 708.5 302.9 710.1 302.8 C711.7 302.6 713.3 302.8 714.9 303.1 C716.5 303.4 718.1 303.9 719.7 304.7 C721.3 305.5 722.9 306.7 724.5 307.9 C726.1 309.1 727.7 310.7 729.3 311.9 C730.9 313.1 732.4 314.4 734.0 315.1 C735.6 315.7 737.2 315.9 738.8 315.5 C740.4 315.1 742.0 314.2 743.6 312.7 C745.2 311.1 746.8 308.5 748.4 306.3 C750.0 304.0 751.6 301.2 753.2 299.1 C754.8 297.0 756.4 295.0 757.9 293.5 C759.5 292.1 761.1 291.1 762.7 290.3 C764.3 289.6 765.4 289.4 767.5 289.1 C769.6 288.8 772.8 288.5 775.5 288.4 C778.1 288.3 781.1 288.8 783.5 288.4 C785.8 288.1 788.0 287.6 789.8 286.4 C791.7 285.1 793.0 283.0 794.6 280.8 C796.2 278.5 797.8 275.7 799.4 272.8 C801.0 269.9 802.6 266.4 804.2 263.3 C805.8 260.1 807.4 256.6 809.0 253.7 C810.5 250.8 812.1 247.7 813.7 245.7 C815.3 243.7 816.7 242.7 818.5 241.7 C820.4 240.8 822.8 240.5 824.9 240.1 C827.0 239.8 829.1 239.6 831.3 239.7 C833.4 239.7 835.5 239.9 837.6 240.6 C839.8 241.4 842.2 242.5 844.0 244.1 C845.9 245.8 847.2 247.8 848.8 250.5 C850.4 253.2 852.0 256.9 853.6 260.1 C855.2 263.3 856.8 266.8 858.4 269.6 C860.0 272.4 862.1 275.8 863.1 276.8 C864.2 277.8 863.7 275.1 864.8 275.9 C865.9 276.6 868.0 279.7 869.6 281.4 C871.2 283.2 872.8 284.9 874.3 286.2 C875.9 287.6 877.5 288.6 879.1 289.4 C880.7 290.3 882.3 291.0 883.9 291.3 C885.5 291.6 887.1 291.8 888.7 291.3 C890.3 290.9 891.9 289.6 893.5 288.6 C895.1 287.6 896.8 286.1 898.3 285.4 C899.7 284.8 900.9 284.1 902.2 284.6 C903.6 285.2 904.8 286.2 906.2 288.6 C907.7 291.0 909.4 295.1 911.0 299.0 C912.6 302.8 914.2 307.5 915.8 311.7 C917.4 316.0 919.0 320.2 920.6 324.5 C922.2 328.7 923.8 333.2 925.3 337.2 C926.9 341.2 928.5 345.2 930.1 348.4 C931.7 351.6 933.3 354.1 934.9 356.4 C936.5 358.6 938.1 360.3 939.7 361.9 C941.3 363.5 942.9 365.0 944.5 365.9 C946.1 366.8 947.7 367.2 949.3 367.5 C950.9 367.8 952.4 367.8 954.0 367.5 C955.6 367.2 957.2 366.7 958.8 365.9 C960.4 365.1 962.0 363.9 963.6 362.7 C965.2 361.5 966.8 360.1 968.4 358.7 C970.0 357.4 971.6 356.0 973.2 354.8 C974.8 353.6 976.4 352.2 977.9 351.6 C979.5 350.9 981.1 350.5 982.7 350.8 C984.3 351.0 985.9 352.2 987.5 353.2 C989.1 354.1 990.7 355.4 992.3 356.4 C993.9 357.3 995.5 358.3 997.1 358.7 C998.7 359.2 1000.3 359.4 1001.9 359.2 C1003.5 359.1 1005.0 358.3 1006.6 357.9 C1008.2 357.6 1009.8 356.8 1011.4 357.2 C1013.0 357.6 1014.6 358.7 1016.2 360.3 C1017.8 361.9 1019.4 364.5 1021.0 366.7 C1022.6 369.0 1024.2 371.6 1025.8 373.9 C1027.4 376.1 1029.0 378.7 1030.5 380.3 C1032.1 381.9 1033.0 383.1 1035.3 383.5 C1037.7 383.8 1042.3 383.1 1044.6 382.5 C1047.0 381.8 1047.8 380.7 1049.4 379.7 C1051.0 378.8 1052.6 377.7 1054.2 376.9 C1055.8 376.1 1057.4 375.4 1059.0 375.0 C1060.6 374.6 1062.2 374.3 1063.8 374.5 C1065.3 374.7 1066.9 374.9 1068.5 376.1 C1070.1 377.3 1071.7 379.8 1073.3 381.7 C1074.9 383.5 1076.5 385.7 1078.1 387.2 C1079.7 388.8 1081.3 390.0 1082.9 390.9 C1084.5 391.8 1086.1 392.1 1087.7 392.5 C1089.3 392.9 1090.9 392.6 1092.4 393.1 C1094.0 393.7 1095.6 394.2 1097.2 396.0 C1098.8 397.8 1100.4 401.1 1102.0 404.0 C1103.6 406.9 1105.2 410.1 1106.8 413.5 C1108.4 417.0 1110.0 420.7 1111.6 424.7 C1113.2 428.7 1114.8 433.2 1116.4 437.4 C1117.9 441.7 1119.5 446.5 1121.1 450.2 C1122.7 453.9 1124.3 457.0 1125.9 459.8 C1127.5 462.6 1129.1 465.0 1130.7 466.9 C1132.3 468.9 1133.9 470.3 1135.5 471.4 C1137.1 472.5 1138.7 472.9 1140.3 473.3 C1141.9 473.7 1143.5 473.8 1145.0 473.8 C1146.6 473.7 1148.2 473.5 1149.8 473.0 C1151.4 472.5 1153.0 471.9 1154.6 470.9 C1156.2 469.9 1157.8 468.4 1159.4 466.9 C1161.0 465.5 1162.6 464.0 1164.2 462.2 C1165.8 460.3 1167.4 457.9 1169.0 455.8 C1170.5 453.7 1172.1 451.3 1173.7 449.4 C1175.3 447.5 1176.9 446.1 1178.5 444.6 C1180.1 443.2 1181.7 441.9 1183.3 440.6 C1184.9 439.4 1186.5 438.2 1188.1 437.1 C1189.7 436.0 1191.3 434.9 1192.9 433.9 C1194.5 432.9 1196.8 431.5 1197.6 431.1" fill="none" stroke="#b866c9" stroke-width="2.2" stroke-linejoin="round"/>
<rect x="10" y="89" width="1723" height="1.2" fill="#ffeb3b"/>
<rect x="10" y="139" width="1723" height="1.2" fill="#ffeb3b"/>
<rect x="10" y="166" width="1723" height="1.2" fill="#ffeb3b"/>
<rect x="10" y="228" width="1723" height="1.2" fill="#ffeb3b"/>
<rect x="10" y="235" width="1723" height="1.2" fill="#ffeb3b"/>
<rect x="10" y="304" width="1723" height="1.2" fill="#ffeb3b"/>
<rect x="10" y="393" width="1723" height="1.2" fill="#ffeb3b"/>
<rect x="10" y="418" width="1723" height="1.2" fill="#ffeb3b"/>
<rect x="10" y="517" width="1723" height="1.2" fill="#ffeb3b"/>
<rect x="10" y="547" width="1723" height="1.2" fill="#ffeb3b"/>
<rect x="10" y="616" width="1723" height="1.2" fill="#ffeb3b"/>
<path d="M10 426.5 H1733" stroke="#d0d0d0" stroke-width="1" stroke-dasharray="1 2" shape-rendering="crispEdges"/>
</g>
<g clip-path="url(#cd)">
<path d="M10.0 754.5 L10.0 871.7 L13.7 834.3 L18.7 809.4 L23.7 784.5 L28.6 762.1 L32.4 748.4 L37.4 745.9 L41.1 739.7 L46.1 724.7 L51.8 714.0 L56.8 716.8 L61.0 734.7 L65.2 749.1 L71.0 749.1 L77.2 744.7 L84.7 745.9 L88.4 744.7 L93.4 745.9 L97.1 755.9 L102.1 765.8 L107.1 770.3 L115.8 772.1 L120.8 768.3 L124.5 777.0 L129.5 788.2 L134.5 792.5 L138.2 791.5 L143.2 804.4 L148.2 812.4 L153.1 814.9 L158.1 812.4 L163.1 808.2 L169.3 797.0 L175.6 788.2 L181.8 782.0 L189.2 774.5 L196.7 768.3 L204.2 762.1 L207.9 754.6 L211.7 747.2 L217.9 740.9 L222.9 732.2 L227.8 726.0 L232.3 724.0 L237.8 727.2 L242.8 731.0 L247.8 735.9 L252.7 745.9 L256.5 752.1 L259.0 757.1 L261.5 745.9 L267.7 742.2 L271.4 749.6 L275.2 759.6 L280.1 767.1 L286.4 775.8 L291.3 779.5 L296.3 784.5 L301.3 787.0 L306.3 786.2 L311.3 779.5 L316.2 775.8 L321.2 772.1 L329.9 768.8 L334.9 762.1 L338.7 754.6 L342.4 750.1 L347.4 750.1 L356.1 745.4 L363.6 744.7 L371.0 742.7 L376.0 742.7 L383.5 740.2 L392.2 740.9 L397.2 732.2 L407.5 718.5 L413.7 703.6 L421.2 690.6 L429.9 691.9 L434.9 691.9 L439.8 699.8 L444.8 709.8 L451.0 717.3 L458.5 726.0 L463.5 737.2 L467.2 749.6 L472.2 757.6 L479.7 762.1 L485.9 772.1 L490.9 782.0 L495.9 787.0 L502.1 787.5 L508.3 792.0 L513.3 804.4 L517.5 818.9 L522.0 818.1 L527.0 813.1 L533.2 806.9 L539.4 797.0 L546.9 787.0 L554.4 782.0 L561.9 776.5 L569.3 768.3 L576.8 764.6 L583.0 762.1 L589.2 757.1 L593.0 756.6 L599.2 759.1 L602.2 759.6 L606.2 756.6 L609.2 767.1 L614.1 779.5 L619.1 787.0 L622.9 801.9 L627.8 809.4 L634.1 815.6 L637.8 814.9 L642.8 825.6 L649.0 830.6 L652.7 833.1 L656.5 856.7 L661.5 869.9 L666.4 870.4 L671.4 868.7 L675.2 865.4 L680.1 854.2 L683.9 841.8 L688.9 829.3 L695.1 818.1 L698.8 814.9 L703.3 809.4 L708.8 813.1 L716.2 811.4 L721.2 806.9 L726.2 801.9 L731.2 804.4 L734.9 803.9 L738.7 789.5 L743.6 777.0 L748.6 765.8 L753.6 759.6 L757.3 757.1 L762.3 758.4 L767.3 758.9 L772.3 757.9 L777.2 759.1 L782.2 755.9 L788.5 745.9 L794.7 729.7 L800.9 717.3 L805.0 709.8 L810.0 705.6 L814.2 704.3 L818.2 712.3 L824.9 715.5 L828.6 716.8 L832.4 716.0 L837.4 721.8 L842.3 723.5 L846.1 733.5 L851.0 744.7 L854.8 755.9 L859.8 762.1 L865.2 767.1 L869.2 759.1 L873.5 763.3 L878.4 768.3 L883.4 772.6 L887.7 771.6 L890.9 763.3 L896.6 758.9 L901.6 764.6 L904.6 784.5 L907.1 792.0 L910.8 800.7 L915.8 809.4 L920.8 816.9 L925.0 824.3 L929.5 824.3 L934.0 823.1 L938.9 827.6 L944.4 823.1 L950.7 818.9 L956.9 811.9 L961.9 805.7 L966.8 801.9 L971.8 795.0 L976.8 788.2 L980.5 787.5 L985.5 792.0 L990.5 795.7 L995.5 794.5 L999.2 787.0 L1004.2 778.3 L1007.9 774.0 L1012.9 775.8 L1014.6 784.5 L1017.9 790.7 L1024.1 795.7 L1030.3 798.2 L1035.3 795.7 L1039.0 788.2 L1044.0 778.3 L1049.0 773.3 L1054.0 772.6 L1062.7 770.8 L1066.4 778.3 L1070.2 787.0 L1072.7 794.0 L1077.6 789.5 L1083.9 783.3 L1090.1 779.0 L1093.8 781.5 L1096.3 784.5 L1100.1 795.7 L1105.0 804.4 L1110.0 811.9 L1115.0 824.3 L1118.7 833.1 L1123.2 838.8 L1128.7 834.3 L1134.9 827.3 L1141.1 820.6 L1147.4 815.6 L1153.6 809.4 L1158.6 801.9 L1164.8 790.7 L1171.0 783.3 L1177.2 773.3 L1182.2 768.3 L1187.2 765.8 L1192.2 759.6 L1195.9 754.6 L1196.9 752.1 L1196.9 754.5 Z" fill="#66676d"/>
<rect x="10" y="754" width="1723" height="1.2" fill="#f2f2f2"/>
<path d="M10.0 887.1 L14.9 876.6 L19.9 856.7 L24.9 834.3 L29.9 811.9 L34.9 794.5 L39.8 779.5 L44.8 765.8 L49.8 753.4 L55.3 742.7 L61.0 741.2 L66.0 743.4 L72.2 744.9 L79.7 745.7 L87.2 745.4 L93.4 745.7 L98.4 748.4 L104.6 755.9 L110.8 760.4 L115.8 763.3 L120.8 764.6 L127.0 770.8 L133.2 776.5 L139.4 781.5 L145.7 790.0 L151.9 797.7 L158.1 801.9 L163.1 803.4 L169.3 801.9 L176.8 797.0 L184.3 791.5 L191.7 784.5 L199.2 777.8 L206.7 771.6 L214.1 762.1 L221.6 752.6 L229.1 744.2 L235.3 737.7 L240.3 735.4 L245.3 734.7 L250.3 736.4 L255.2 739.7 L259.5 744.2 L264.0 744.2 L268.9 743.7 L273.9 746.7 L280.1 752.1 L286.4 759.6 L292.6 765.8 L298.8 772.1 L305.0 775.8 L311.3 777.3 L317.5 776.5 L323.7 775.0 L331.2 772.6 L338.7 767.1 L346.1 760.8 L353.6 755.9 L361.1 752.1 L368.5 749.1 L376.0 746.7 L383.5 744.7 L392.2 743.4 L398.4 739.7 L407.5 732.2 L414.9 722.3 L421.2 712.3 L427.4 706.1 L433.6 701.1 L438.6 699.8 L443.6 701.8 L449.8 706.1 L457.3 712.3 L463.5 719.8 L468.5 728.5 L474.7 737.2 L480.9 745.9 L485.9 752.1 L490.9 760.8 L497.1 768.3 L503.3 774.5 L509.6 779.5 L514.5 785.7 L518.3 793.2 L523.3 798.9 L528.2 802.4 L533.2 803.7 L538.2 802.4 L544.4 798.9 L551.9 793.2 L559.4 788.2 L566.8 782.0 L574.3 776.5 L581.8 771.6 L589.2 765.8 L596.7 762.8 L602.9 761.3 L606.7 760.4 L611.7 763.3 L619.1 772.1 L624.1 780.8 L631.6 790.7 L639.0 800.7 L646.5 809.4 L652.7 818.1 L657.7 830.6 L661.5 839.3 L666.4 846.8 L671.4 852.2 L675.2 855.0 L678.9 855.0 L683.9 851.7 L688.9 845.5 L695.1 836.8 L702.5 826.8 L710.0 821.4 L718.7 816.9 L726.2 811.9 L734.9 808.9 L739.9 803.2 L746.1 795.7 L752.3 784.5 L758.6 774.5 L764.8 769.6 L772.3 765.3 L778.5 763.3 L786.0 759.6 L790.9 754.6 L795.9 747.2 L800.0 742.2 L806.2 731.0 L812.5 722.3 L818.7 718.8 L824.9 718.0 L832.4 717.5 L837.4 718.5 L842.3 719.8 L847.3 724.7 L852.3 731.0 L858.5 740.9 L864.7 748.4 L872.2 753.4 L878.4 758.4 L883.4 762.1 L888.4 763.6 L894.6 762.6 L900.8 762.1 L904.6 767.1 L909.6 774.5 L915.8 784.5 L922.0 795.7 L928.2 805.7 L935.7 811.9 L941.9 816.1 L948.2 817.4 L954.4 816.9 L960.6 814.4 L966.8 810.2 L973.1 805.2 L979.3 798.9 L985.5 796.5 L993.0 796.0 L999.2 794.5 L1005.4 788.2 L1012.9 783.8 L1020.4 786.5 L1027.8 790.7 L1034.1 792.5 L1039.0 792.0 L1045.3 787.7 L1052.7 782.0 L1059.0 779.0 L1064.0 776.3 L1067.7 777.0 L1072.7 780.8 L1077.6 783.3 L1083.9 783.3 L1090.1 782.0 L1095.1 782.0 L1101.3 787.0 L1108.8 794.5 L1115.0 804.4 L1122.5 816.9 L1128.7 821.9 L1134.9 823.8 L1141.1 823.6 L1148.6 820.6 L1156.1 815.6 L1162.3 809.4 L1168.5 801.9 L1174.8 793.2 L1181.0 785.3 L1187.2 778.3 L1192.2 773.3 L1196.9 768.3" fill="none" stroke="#f23645" stroke-width="1.3" stroke-linejoin="round"/>
</g>
<rect x="10" y="666" width="1814" height="1.2" fill="#e8e8e8"/>
<rect x="1733" y="27" width="1" height="916" fill="#6a6a6a"/>
<rect x="10" y="908" width="1814" height="1" fill="#6a6a6a"/>
</svg>
<div class="t hd" id="hd" style="transform:scaleX(0.9869)">11月 24, 2025 13:12 UTC+9、takatabaがTradingView.comで作成</div>
<div class="t lg" id="lg0" style="top:36.0px;transform:scaleX(0.9385)">ETHUSDT SPOT · 4時間 · Bybit</div>
<div class="t lg" id="lg1" style="top:53.0px;transform:scaleX(0.9903)">HMA (20, close)&nbsp; <span class="p">2,844.24</span></div>
<div class="t lg" id="lg2" style="top:69.9px;transform:scaleX(0.9893)">BB (50, SMA, close, 2.5)&nbsp; <span class="bl">3,357.25&nbsp; 2,543.10</span></div>
<div class="t lg" id="lg3" style="top:86.8px;transform:scaleX(0.9853)">HMA (80, close)&nbsp; <span class="bl">2,714.71</span></div>
<div class="t lg" id="lg4" style="top:103.8px;transform:scaleX(0.9749)">BB · 240 (50, SMA, close, 2.5)</div>
<div class="t lg" id="lg5" style="top:120.8px;transform:scaleX(0.9868)">HMA (320, close)&nbsp; <span class="gr">2,906.14</span></div>
<div class="t lg" id="lg6" style="top:137.7px;transform:scaleX(0.9683)">HMA · 1D (320, close)</div>
<div class="t lg" id="lg7" style="top:154.6px;transform:scaleX(0.9869)">HMA · 240 (320, close)</div>
<div class="t lg" id="lg8" style="top:171.6px;transform:scaleX(0.9752)">HMA · 1D (80, close)</div>
<div class="t lg" id="lg9" style="top:188.5px;transform:scaleX(0.9752)">HMA · 1D (20, close)</div>
<div class="t lg" id="lg10" style="top:205.5px;transform:scaleX(1.0110)">一目均衡表® (9, 26, 52, 26)</div>
<div class="t lg" id="lgA" style="left:186.9px;top:36px;transform:scaleX(0.9912)">始値<span class="g">2,856.45</span></div>
<div class="t lg" id="lgB" style="left:264.5px;top:36px;transform:scaleX(1.0009)">高値<span class="g">2,870.58</span></div>
<div class="t lg" id="lgC" style="left:342.0px;top:36px;transform:scaleX(1.0052)">安値<span class="g">2,853.60</span></div>
<div class="t lg" id="lgD" style="left:420.0px;top:36px;transform:scaleX(0.9995)">終値<span class="g">2,868.24</span></div>
<div class="t lg" id="lgM" style="top:676px;transform:scaleX(0.9611)">MACD (9, 17, close)</div>
<div class="t ax" style="top:38.6px">4,400.00</div>
<div class="t ax" style="top:88.1px">4,200.00</div>
<div class="t ax" style="top:137.6px">4,000.00</div>
<div class="t ax" style="top:187.1px">3,800.00</div>
<div class="t ax" style="top:236.6px">3,600.00</div>
<div class="t ax" style="top:286.1px">3,400.00</div>
<div class="t ax" style="top:335.5px">3,200.00</div>
<div class="t ax" style="top:385.0px">3,000.00</div>
<div class="t ax" style="top:434.5px">2,800.00</div>
<div class="t ax" style="top:484.0px">2,600.00</div>
<div class="t ax" style="top:533.5px">2,400.00</div>
<div class="t ax" style="top:583.0px">2,200.00</div>
<div class="t ax" style="top:632.4px">2,000.00</div>
<div class="t yl" style="top:78.0px">4,230.00</div>
<div class="t yl" style="top:128.0px">4,030.00</div>
<div class="t yl" style="top:155.0px">3,920.00</div>
<div class="t yl" style="top:200.7px">3,670.00</div>
<div class="t yl" style="top:223.5px">3,640.00</div>
<div class="t yl" style="top:293.0px">3,360.00</div>
<div class="t yl" style="top:369.5px">3,000.00</div>
<div class="t yl" style="top:392.0px">2,900.00</div>
<div class="t yl" style="top:506.0px">2,500.00</div>
<div class="t yl" style="top:535.5px">2,380.00</div>
<div class="t yl" style="top:605.0px">2,100.00</div>
<div class="t gl" style="top:415.1px">2,868.24</div>
<div class="t" style="left:1734px;top:667px;width:90px;height:241px;overflow:hidden">
<div class="t ax" style="left:10px;top:-4.5px">80.00</div>
<div class="t ax" style="left:10px;top:38.0px">40.00</div>
<div class="t ax" style="left:10px;top:80.0px">0.00</div>
<div class="t ax" style="left:10px;top:122.0px">−40.00</div>
<div class="t ax" style="left:10px;top:164.0px">−80.00</div>
<div class="t ax" style="left:10px;top:206.0px">−120.00</div>
</div>
<div class="t tm" style="left:74.7px">15</div>
<div class="t tm" style="left:158.0px">18</div>
<div class="t tm" style="left:241.0px">21</div>
<div class="t tm" style="left:324.0px">24</div>
<div class="t tm" style="left:407.4px">27</div>
<div class="t tm b" style="left:545.6px">11月</div>
<div class="t tm" style="left:628.7px">4</div>
<div class="t tm" style="left:711.8px">7</div>
<div class="t tm" style="left:795.0px">10</div>
<div class="t tm" style="left:878.0px">13</div>
<div class="t tm" style="left:961.2px">16</div>
<div class="t tm" style="left:1044.3px">19</div>
<div class="t tm" style="left:1127.4px">22</div>
<div class="t tm" style="left:1210.5px">25</div>
<div class="t tm" style="left:1293.6px">28</div>
<div class="t tm b" style="left:1376.7px">12月</div>
<div class="t tm" style="left:1460.0px">4</div>
<div class="t tm" style="left:1543.4px">7</div>
<div class="t tm" style="left:1627.0px">10</div>
<div class="t tm" style="left:1710.2px">13</div>
<svg style="position:absolute;left:12px;top:966px" width="30" height="14.8" viewBox="0 0 36 19" preserveAspectRatio="none"><path fill="#e0e0e0" d="M14 19H7V7H0V0h14v19zM28.5 19H20.5L28.5 0h8l-8 19z"/><circle cx="20" cy="3.6" r="3.6" fill="#e0e0e0"/></svg>
<div class="t" id="tv" style="left:49px;top:963px;font-size:21px;font-weight:bold;color:#e0e0e0;letter-spacing:-0.3px">TradingView</div>
</body></html>
